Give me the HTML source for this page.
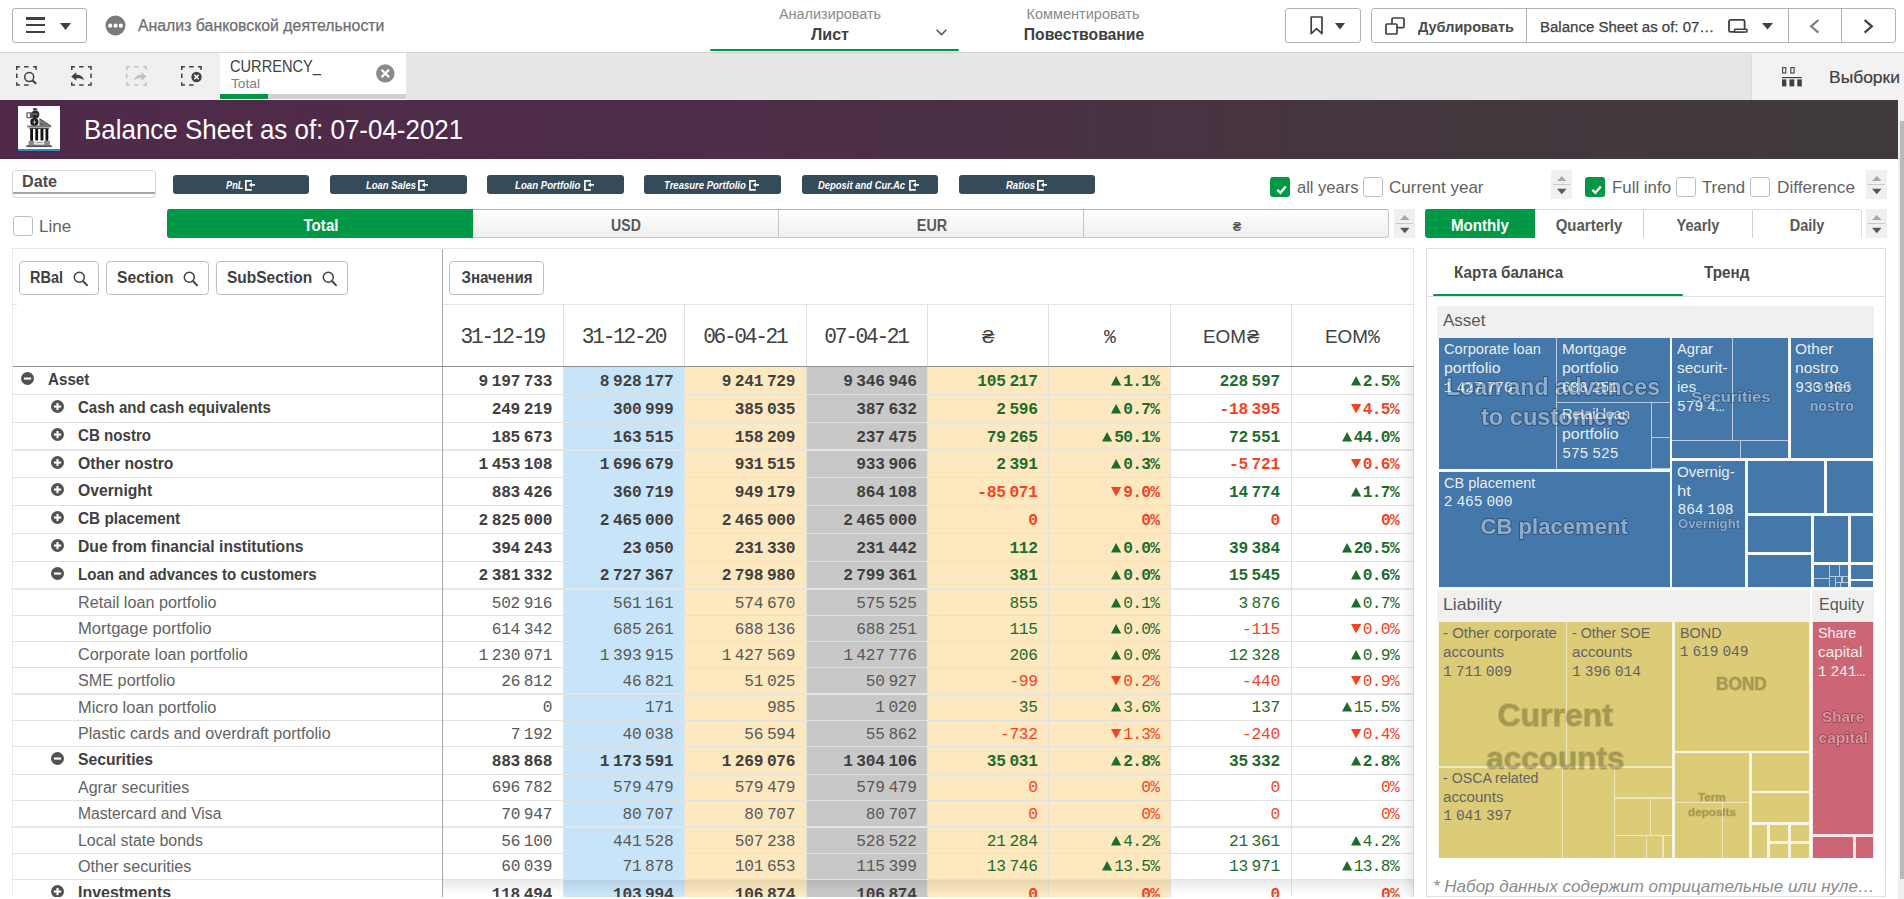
<!DOCTYPE html>
<html><head><meta charset="utf-8"><title>Balance Sheet</title><style>
html,body{margin:0;padding:0;}
body{width:1904px;height:899px;overflow:hidden;background:#fff;position:relative;font-family:"Liberation Sans",sans-serif;color:#404040;}
div{position:absolute;box-sizing:border-box;}
.t{white-space:nowrap;}
svg{position:absolute;overflow:visible;}
</style></head>
<body>
<!-- top bar -->
<div style="left:0px;top:0px;width:1904px;height:53px;background:#fff;border-bottom:1px solid #d4d4d4;"></div>
<div style="left:12px;top:8px;width:74.7px;height:34.6px;border:1px solid #b3b3b3;border-radius:3px;background:#fff;"></div>
<div style="left:26px;top:17.3px;width:18.8px;height:2.3px;background:#404040;"></div>
<div style="left:26px;top:24.1px;width:18.8px;height:2.3px;background:#404040;"></div>
<div style="left:26px;top:31.1px;width:18.8px;height:2.3px;background:#404040;"></div>
<svg style="left:60px;top:22.5px" width="11" height="7"><path d="M0 0H11L5.5 7Z" fill="#404040"/></svg>
<svg style="left:105px;top:15px" width="21" height="21"><circle cx="10.5" cy="10.5" r="10" fill="#7a7a7a"/><circle cx="5.2" cy="10.7" r="2.1" fill="#fff"/><circle cx="10.5" cy="10.7" r="2.1" fill="#fff"/><circle cx="15.8" cy="10.7" r="2.1" fill="#fff"/></svg>
<div class="t" style="left:137.5px;top:17.59px;font-size:15.6px;line-height:15.6px;transform:scaleX(1.0156);transform-origin:left center;color:#6e6e6e;-webkit-text-stroke:0.25px #6e6e6e;">Анализ банковской деятельности</div>
<div class="t" style="left:429.5px;width:800px;text-align:center;top:7.05px;font-size:14px;line-height:14px;transform:scaleX(1.0290);transform-origin:center center;color:#8a8a8a;">Анализировать</div>
<div class="t" style="left:429.5px;width:800px;text-align:center;top:26.86px;font-size:16px;line-height:16px;transform:scaleX(1.0054);transform-origin:center center;color:#404040;font-weight:bold;">Лист</div>
<svg style="left:936px;top:29.3px" width="11" height="7"><path d="M0.6 0.8L5.5 5.6L10.4 0.8" fill="none" stroke="#595959" stroke-width="1.6"/></svg>
<div style="left:709.5px;top:48.7px;width:249.5px;height:2.4px;background:#009845;border-radius:1px;"></div>
<div class="t" style="left:683px;width:800px;text-align:center;top:7.05px;font-size:14px;line-height:14px;transform:scaleX(1.0369);transform-origin:center center;color:#8a8a8a;">Комментировать</div>
<div class="t" style="left:683.9000000000001px;width:800px;text-align:center;top:26.86px;font-size:16px;line-height:16px;transform:scaleX(0.9825);transform-origin:center center;color:#404040;font-weight:bold;">Повествование</div>
<div style="left:1285px;top:8px;width:75.5px;height:34.6px;border:1px solid #b3b3b3;border-radius:3px;background:#fff;"></div>
<svg style="left:1310px;top:16.2px" width="14" height="20"><path d="M1.2 1H12V17.6L6.6 12.6L1.2 17.6Z" fill="none" stroke="#404040" stroke-width="1.7" stroke-linejoin="round"/></svg>
<svg style="left:1335px;top:23px" width="10" height="7"><path d="M0 0H10L5 6.6Z" fill="#404040"/></svg>
<div style="left:1371px;top:8px;width:525px;height:34.6px;border:1px solid #b3b3b3;border-radius:3px;background:#fff;"></div>
<div style="left:1526.2px;top:8px;width:1px;height:34.6px;background:#b3b3b3;"></div>
<div style="left:1788.2px;top:8px;width:1px;height:34.6px;background:#b3b3b3;"></div>
<div style="left:1841.2px;top:8px;width:1px;height:34.6px;background:#b3b3b3;"></div>
<svg style="left:1385px;top:16.6px" width="20" height="18"><rect x="7" y="1" width="12" height="9.6" rx="1" fill="#fff" stroke="#404040" stroke-width="1.7"/><rect x="1" y="7" width="11" height="10" rx="1" fill="#fff" stroke="#404040" stroke-width="1.7"/></svg>
<div class="t" style="left:1417.5px;top:18.96px;font-size:15.4px;line-height:15.4px;transform:scaleX(0.9434);transform-origin:left center;font-weight:bold;color:#4a4a4a;">Дублировать</div>
<div class="t" style="left:1540px;top:18.96px;font-size:15.4px;line-height:15.4px;transform:scaleX(0.9752);transform-origin:left center;color:#404040;-webkit-text-stroke:0.25px #404040;">Balance Sheet as of: 07…</div>
<svg style="left:1727px;top:17.5px" width="22" height="17"><rect x="2" y="1.9" width="15.6" height="12" rx="1.6" fill="#fff" stroke="#404040" stroke-width="1.8"/><rect x="7.6" y="11.3" width="12.4" height="2.8" rx="0.6" fill="#fff" stroke="#404040" stroke-width="1.5"/></svg>
<svg style="left:1762px;top:23px" width="11" height="7"><path d="M0 0H11L5.5 6.6Z" fill="#404040"/></svg>
<svg style="left:1809.4px;top:18.9px" width="11" height="15"><path d="M9.4 1L2.2 7.3L9.4 13.6" fill="none" stroke="#808080" stroke-width="2.3"/></svg>
<svg style="left:1863.2px;top:18.9px" width="11" height="15"><path d="M1.6 1L8.8 7.3L1.6 13.6" fill="none" stroke="#404040" stroke-width="2.3"/></svg>
<!-- selection bar -->
<div style="left:0px;top:53px;width:1904px;height:47px;background:#e6e6e6;"></div>
<div style="left:0px;top:53px;width:220px;height:47px;background:#f0f0f0;"></div>
<svg style="left:16px;top:65.9px" width="21" height="20"><path d="M0.75 3.9V0.75H3.9M8.1 0.75H12.6M17 0.75H20.05V3.9M0.75 12V7.4M3.9 18.95H0.75V16.3M12.6 18.95H8.1" fill="none" stroke="#404040" stroke-width="1.5"/><circle cx="13.2" cy="11" r="4.5" fill="none" stroke="#404040" stroke-width="1.5"/><path d="M16.6 14.6L20.2 17.7" stroke="#404040" stroke-width="2.1"/></svg>
<svg style="left:71.2px;top:65.9px" width="21" height="20"><path d="M0.75 3.9V0.75H3.9M8.1 0.75H12.6M17 0.75H20.05V3.9M20.05 7.4V12M20.05 16.3V18.95H17M12.6 18.95H8.1M3.9 18.95H0.75V16.3" fill="none" stroke="#404040" stroke-width="1.5"/><path d="M0.2 10.5L5.3 6.2V8.8C9.5 8.8 12.2 10.6 13 14.4C11 12.6 8.8 12.2 5.3 12.3V14.8Z" fill="#404040"/></svg>
<svg style="left:126.3px;top:65.9px" width="21" height="20"><path d="M0.75 3.9V0.75H3.9M8.1 0.75H12.6M17 0.75H20.05V3.9M0.75 12V7.4M20.05 16.3V18.95H17M12.6 18.95H8.1M3.9 18.95H0.75V16.3" fill="none" stroke="#c2c2c2" stroke-width="1.5"/><path d="M20.6 10.5L15.5 6.2V8.8C11.3 8.8 8.6 10.6 7.8 14.4C9.8 12.6 12 12.2 15.5 12.3V14.8Z" fill="#c2c2c2"/></svg>
<svg style="left:181.2px;top:65.9px" width="21" height="20"><path d="M0.75 3.9V0.75H3.9M8.1 0.75H12.6M17 0.75H20.05V3.9M0.75 12V7.4M3.9 18.95H0.75V16.3M12.6 18.95H8.1" fill="none" stroke="#404040" stroke-width="1.5"/><circle cx="15.5" cy="11" r="5.2" fill="#404040"/><path d="M13.3 8.8L17.7 13.2M17.7 8.8L13.3 13.2" stroke="#fff" stroke-width="1.5"/></svg>
<div style="left:220px;top:53px;width:186px;height:46.5px;background:#fff;"></div>
<div style="left:220px;top:94px;width:185.5px;height:5px;background:#d0d0d0;"></div>
<div style="left:220px;top:94px;width:47.5px;height:5px;background:#009845;"></div>
<div class="t" style="left:230px;top:59.13px;font-size:15.8px;line-height:15.8px;transform:scaleX(0.9255);transform-origin:left center;color:#404040;">CURRENCY_</div>
<div class="t" style="left:230.5px;top:77.56px;font-size:12.8px;line-height:12.8px;transform:scaleX(1.0726);transform-origin:left center;color:#808080;">Total</div>
<svg style="left:376px;top:64px" width="19" height="19"><circle cx="9.3" cy="9.4" r="9.2" fill="#8a8a8a"/><path d="M5.6 5.7L13 13.1M13 5.7L5.6 13.1" stroke="#fff" stroke-width="2.2"/></svg>
<div style="left:1751px;top:53px;width:153px;height:47px;background:#f2f2f2;border-left:1px solid #dcdcdc;"></div>
<svg style="left:1782px;top:67.2px" width="21" height="20"><rect x="0.6" y="0.6" width="3.2" height="5.4" fill="none" stroke="#404040" stroke-width="1.1"/><rect x="8.8" y="0.6" width="3.3" height="5.4" fill="none" stroke="#404040" stroke-width="1.1"/><rect x="0" y="10" width="19.8" height="1.2" fill="#404040"/><rect x="0" y="12.4" width="4.3" height="7" fill="#404040"/><rect x="7.5" y="12.4" width="4.8" height="7" fill="#404040"/><rect x="15.3" y="12.4" width="4.5" height="7" fill="#404040"/></svg>
<div class="t" style="left:1829.3px;top:69.58px;font-size:16.8px;line-height:16.8px;transform:scaleX(1.0392);transform-origin:left center;color:#404040;-webkit-text-stroke:0.2px #404040;">Выборки</div>
<!-- header -->
<div style="left:0px;top:100px;width:1897.5px;height:59px;background:linear-gradient(90deg,#50294a 0%,#4d2d47 40%,#44373f 75%,#403a3c 100%);"></div>
<div style="left:17.8px;top:105.7px;width:42.3px;height:45.5px;background:#fff;"></div>
<div style="left:17.8px;top:148.7px;width:42.3px;height:2.5px;background:#2b8ac6;"></div>
<svg style="left:17.8px;top:105.7px" width="43" height="46" viewBox="0 0 43 46">
<path d="M14.6 2.6Q17 1.4 19.6 2.9L18.6 4.4H15.6Z" fill="#444"/>
<ellipse cx="17.4" cy="8.4" rx="3.9" ry="4" fill="#2a2a2a"/>
<rect x="8.4" y="6.3" width="6" height="6" rx="0.8" fill="#555"/><rect x="9.6" y="7.4" width="2.2" height="3.8" fill="#fff"/>
<circle cx="15.6" cy="8.3" r="1" fill="#888"/><circle cx="18.4" cy="8.1" r="1" fill="#888"/>
<path d="M21.4 12.8L33 20.2H21.4Z" fill="#777"/><path d="M21.6 12.7L33.2 20" stroke="#444" stroke-width="1"/>
<path d="M22.6 17L26.6 19.6H22.6Z" fill="#555"/>
<circle cx="16.4" cy="16.1" r="4.1" fill="#1c1c1c"/><path d="M16.4 13.6V18.6M14.6 16.1H18.2" stroke="#bbb" stroke-width="0.9"/>
<rect x="9.2" y="19.5" width="23.8" height="1.9" fill="#777"/>
<rect x="11.4" y="21.8" width="19.6" height="1.2" fill="#444"/>
<rect x="12.2" y="23" width="2.8" height="11.8" fill="#111"/><rect x="17.3" y="23" width="2.8" height="11.8" fill="#111"/><rect x="22.5" y="23" width="2.9" height="11.8" fill="#111"/><rect x="27.5" y="23" width="2.8" height="11.8" fill="#111"/>
<rect x="10.6" y="35" width="21.4" height="4.2" fill="#8a8a8a"/><rect x="16.1" y="34.6" width="10" height="4" fill="#f4f4f4"/><rect x="17.6" y="36" width="7" height="1.2" fill="#999"/>
<rect x="8.3" y="39.2" width="25.5" height="1.9" fill="#555"/>
</svg>
<div class="t" style="left:84.4px;top:115.81px;font-size:27.4px;line-height:27.4px;transform:scaleX(0.9467);transform-origin:left center;color:#fff;">Balance Sheet as of: 07-04-2021</div>
<div style="left:1897.5px;top:100px;width:6.5px;height:799px;background:#f0f0f0;"></div>
<div style="left:1899.5px;top:121px;width:4.5px;height:758px;background:#b9b9b9;"></div>
<!-- toolbar -->
<div style="left:12px;top:170px;width:143.5px;height:27.5px;border:1px solid #d9d9d9;border-radius:3px;background:#fff;"></div>
<div style="left:12.5px;top:192.2px;width:142.5px;height:1.5px;background:#a6a6a6;"></div>
<div class="t" style="left:21.9px;top:173.73px;font-size:15.8px;line-height:15.8px;transform:scaleX(1.0220);transform-origin:left center;font-weight:bold;color:#4a4a4a;">Date</div>
<div style="left:173px;top:175px;width:136px;height:18.9px;background:#354b5a;border-radius:3px;"></div>
<div class="t" style="left:226.1px;top:179.51px;font-size:10.5px;line-height:10.5px;transform:scaleX(0.8774);transform-origin:left center;color:#fff;font-weight:bold;font-style:italic;">PnL</div>
<svg style="left:245.0px;top:179.7px" width="11" height="11"><path d="M6.8 0.9H0.9V9.9H6.8" fill="none" stroke="#fff" stroke-width="1.7"/><path d="M3.9 4.9L7 2.2V4.1H10V5.7H7V7.6Z" fill="#fff"/></svg>
<div style="left:330px;top:175px;width:137px;height:18.9px;background:#354b5a;border-radius:3px;"></div>
<div class="t" style="left:366.0px;top:179.51px;font-size:10.5px;line-height:10.5px;transform:scaleX(0.9001);transform-origin:left center;color:#fff;font-weight:bold;font-style:italic;">Loan Sales</div>
<svg style="left:417.79999999999995px;top:179.7px" width="11" height="11"><path d="M6.8 0.9H0.9V9.9H6.8" fill="none" stroke="#fff" stroke-width="1.7"/><path d="M3.9 4.9L7 2.2V4.1H10V5.7H7V7.6Z" fill="#fff"/></svg>
<div style="left:487px;top:175px;width:137px;height:18.9px;background:#354b5a;border-radius:3px;"></div>
<div class="t" style="left:515.1px;top:179.51px;font-size:10.5px;line-height:10.5px;transform:scaleX(0.9191);transform-origin:left center;color:#fff;font-weight:bold;font-style:italic;">Loan Portfolio</div>
<svg style="left:583.6px;top:179.7px" width="11" height="11"><path d="M6.8 0.9H0.9V9.9H6.8" fill="none" stroke="#fff" stroke-width="1.7"/><path d="M3.9 4.9L7 2.2V4.1H10V5.7H7V7.6Z" fill="#fff"/></svg>
<div style="left:644px;top:175px;width:137px;height:18.9px;background:#354b5a;border-radius:3px;"></div>
<div class="t" style="left:663.7px;top:179.51px;font-size:10.5px;line-height:10.5px;transform:scaleX(0.9064);transform-origin:left center;color:#fff;font-weight:bold;font-style:italic;">Treasure Portfolio</div>
<svg style="left:749.0px;top:179.7px" width="11" height="11"><path d="M6.8 0.9H0.9V9.9H6.8" fill="none" stroke="#fff" stroke-width="1.7"/><path d="M3.9 4.9L7 2.2V4.1H10V5.7H7V7.6Z" fill="#fff"/></svg>
<div style="left:802px;top:175px;width:136px;height:18.9px;background:#354b5a;border-radius:3px;"></div>
<div class="t" style="left:817.7px;top:179.51px;font-size:10.5px;line-height:10.5px;transform:scaleX(0.8993);transform-origin:left center;color:#fff;font-weight:bold;font-style:italic;">Deposit and Cur.Ac</div>
<svg style="left:908.6px;top:179.7px" width="11" height="11"><path d="M6.8 0.9H0.9V9.9H6.8" fill="none" stroke="#fff" stroke-width="1.7"/><path d="M3.9 4.9L7 2.2V4.1H10V5.7H7V7.6Z" fill="#fff"/></svg>
<div style="left:959px;top:175px;width:136px;height:18.9px;background:#354b5a;border-radius:3px;"></div>
<div class="t" style="left:1006.2px;top:179.51px;font-size:10.5px;line-height:10.5px;transform:scaleX(0.9037);transform-origin:left center;color:#fff;font-weight:bold;font-style:italic;">Ratios</div>
<svg style="left:1036.7px;top:179.7px" width="11" height="11"><path d="M6.8 0.9H0.9V9.9H6.8" fill="none" stroke="#fff" stroke-width="1.7"/><path d="M3.9 4.9L7 2.2V4.1H10V5.7H7V7.6Z" fill="#fff"/></svg>
<div style="left:1270px;top:177px;width:20px;height:20px;background:#009845;border-radius:3px;"></div>
<svg style="left:1270px;top:177px" width="20" height="20"><path d="M7.3 12.8L10.4 15.8L15.8 9.6" fill="none" stroke="#fff" stroke-width="2.3"/></svg>
<div class="t" style="left:1296.5px;top:178.91px;font-size:17px;line-height:17px;transform:scaleX(0.9715);transform-origin:left center;color:#636363;">all years</div>
<div style="left:1362.7px;top:177px;width:20px;height:20px;background:#fff;border:1px solid #bfbfbf;border-radius:3px;"></div>
<div class="t" style="left:1389px;top:178.91px;font-size:17px;line-height:17px;transform:scaleX(1.0002);transform-origin:left center;color:#636363;">Current year</div>
<div style="left:1551px;top:170px;width:21px;height:28.5px;background:#f0f0f0;"></div>
<svg style="left:1556.7px;top:175.85px" width="9.6" height="18.4"><path d="M0 4.9L4.8 0L9.6 4.9Z" fill="#a8a8a8"/><path d="M0 12.8L4.8 18.2L9.6 12.8Z" fill="#595959"/></svg>
<div style="left:1553px;top:183.85px;width:17px;height:1px;background:#c8c8c8;"></div>
<div style="left:1585px;top:177px;width:20px;height:20px;background:#009845;border-radius:3px;"></div>
<svg style="left:1585px;top:177px" width="20" height="20"><path d="M7.3 12.8L10.4 15.8L15.8 9.6" fill="none" stroke="#fff" stroke-width="2.3"/></svg>
<div class="t" style="left:1611.5px;top:178.91px;font-size:17px;line-height:17px;transform:scaleX(0.9912);transform-origin:left center;color:#636363;">Full info</div>
<div style="left:1676px;top:177px;width:20px;height:20px;background:#fff;border:1px solid #bfbfbf;border-radius:3px;"></div>
<div class="t" style="left:1702.3px;top:178.91px;font-size:17px;line-height:17px;transform:scaleX(0.9822);transform-origin:left center;color:#636363;">Trend</div>
<div style="left:1750px;top:177px;width:20px;height:20px;background:#fff;border:1px solid #bfbfbf;border-radius:3px;"></div>
<div class="t" style="left:1776.5px;top:178.91px;font-size:17px;line-height:17px;transform:scaleX(1.0107);transform-origin:left center;color:#636363;">Difference</div>
<div style="left:1866px;top:170px;width:21px;height:28.5px;background:#f0f0f0;"></div>
<svg style="left:1871.7px;top:175.85px" width="9.6" height="18.4"><path d="M0 4.9L4.8 0L9.6 4.9Z" fill="#a8a8a8"/><path d="M0 12.8L4.8 18.2L9.6 12.8Z" fill="#595959"/></svg>
<div style="left:1868px;top:183.85px;width:17px;height:1px;background:#c8c8c8;"></div>
<div style="left:13px;top:215.8px;width:20px;height:20px;background:#fff;border:1px solid #bfbfbf;border-radius:3px;"></div>
<div class="t" style="left:38.7px;top:217.61px;font-size:17px;line-height:17px;transform:scaleX(1.0049);transform-origin:left center;color:#636363;">Line</div>
<div style="left:166.8px;top:209px;width:1222.7px;height:29px;background:linear-gradient(#ffffff,#efefef);border:1px solid #c8c8c8;border-top-color:#b4b4b4;border-radius:3px;"></div>
<div style="left:166.8px;top:209px;width:306px;height:29px;background:#009845;border-radius:3px 0 0 3px;"></div>
<div style="left:777.8px;top:210px;width:1px;height:27.5px;background:#c4c4c4;"></div>
<div style="left:1083.3px;top:210px;width:1px;height:27.5px;background:#c4c4c4;"></div>
<div class="t" style="left:-78.69999999999999px;width:800px;text-align:center;top:217.99px;font-size:15.6px;line-height:15.6px;transform:scaleX(0.9693);transform-origin:center center;font-weight:bold;color:#fff;">Total</div>
<div class="t" style="left:226.39999999999998px;width:800px;text-align:center;top:217.99px;font-size:15.6px;line-height:15.6px;transform:scaleX(0.9047);transform-origin:center center;font-weight:bold;color:#595959;">USD</div>
<div class="t" style="left:531.7px;width:800px;text-align:center;top:217.99px;font-size:15.6px;line-height:15.6px;transform:scaleX(0.9199);transform-origin:center center;font-weight:bold;color:#595959;">EUR</div>
<div class="t" style="left:837px;width:800px;text-align:center;top:220.09px;font-size:13.6px;line-height:13.6px;transform:scaleX(0.9480);transform-origin:center center;font-weight:bold;color:#595959;">₴</div>
<div style="left:1394px;top:209px;width:21px;height:28.8px;background:#f0f0f0;"></div>
<svg style="left:1399.7px;top:215.0px" width="9.6" height="18.4"><path d="M0 4.9L4.8 0L9.6 4.9Z" fill="#a8a8a8"/><path d="M0 12.8L4.8 18.2L9.6 12.8Z" fill="#595959"/></svg>
<div style="left:1396px;top:223.0px;width:17px;height:1px;background:#c8c8c8;"></div>
<div style="left:1425px;top:209px;width:437px;height:29px;background:#fff;border:1px solid #dcdcdc;border-left:0;border-bottom:0;border-radius:0 3px 0 0;"></div>
<div style="left:1425px;top:209px;width:110px;height:29px;background:#009845;border-radius:3px 0 0 3px;"></div>
<div style="left:1642.6px;top:210px;width:1px;height:28px;background:#d0d0d0;"></div>
<div style="left:1751.6px;top:210px;width:1px;height:28px;background:#d0d0d0;"></div>
<div class="t" style="left:1080.2px;width:800px;text-align:center;top:217.99px;font-size:15.6px;line-height:15.6px;transform:scaleX(0.9701);transform-origin:center center;font-weight:bold;color:#fff;">Monthly</div>
<div class="t" style="left:1189.2px;width:800px;text-align:center;top:217.99px;font-size:15.6px;line-height:15.6px;transform:scaleX(0.9602);transform-origin:center center;font-weight:bold;color:#595959;">Quarterly</div>
<div class="t" style="left:1298px;width:800px;text-align:center;top:217.99px;font-size:15.6px;line-height:15.6px;transform:scaleX(0.9352);transform-origin:center center;font-weight:bold;color:#595959;">Yearly</div>
<div class="t" style="left:1406.9px;width:800px;text-align:center;top:217.99px;font-size:15.6px;line-height:15.6px;transform:scaleX(0.9306);transform-origin:center center;font-weight:bold;color:#595959;">Daily</div>
<div style="left:1866px;top:209px;width:21px;height:28.8px;background:#f0f0f0;"></div>
<svg style="left:1871.7px;top:215.0px" width="9.6" height="18.4"><path d="M0 4.9L4.8 0L9.6 4.9Z" fill="#a8a8a8"/><path d="M0 12.8L4.8 18.2L9.6 12.8Z" fill="#595959"/></svg>
<div style="left:1868px;top:223.0px;width:17px;height:1px;background:#c8c8c8;"></div>
<!-- pivot table -->
<div style="left:12px;top:248px;width:1402px;height:660px;border:1px solid #e6e6e6;border-left-color:#ececec;border-bottom:0;background:#fff;"></div>
<div style="left:563.4px;top:367px;width:121.39999999999998px;height:540px;background:#c8e4f8;"></div>
<div style="left:684.8px;top:367px;width:121.20000000000005px;height:540px;background:#fde8c0;"></div>
<div style="left:806.0px;top:367px;width:121.19999999999993px;height:540px;background:#c8c8c8;"></div>
<div style="left:927.1999999999999px;top:367px;width:121.60000000000002px;height:540px;background:#fde8c0;"></div>
<div style="left:1048.8px;top:367px;width:121.5px;height:540px;background:#fde8c0;"></div>
<div style="left:19px;top:260.7px;width:79.7px;height:34px;border:1px solid #bfbfbf;border-radius:4px;background:#fff;"></div>
<div class="t" style="left:29.7px;top:269.53px;font-size:15.8px;line-height:15.8px;transform:scaleX(0.9167);transform-origin:left center;font-weight:bold;color:#404040;">RBal</div>
<svg style="left:73px;top:270.6px" width="16" height="16"><circle cx="6.3" cy="6.3" r="5" fill="none" stroke="#404040" stroke-width="1.5"/><path d="M10 10L14.6 14.8" stroke="#404040" stroke-width="1.9"/></svg>
<div style="left:106px;top:260.7px;width:102.7px;height:34px;border:1px solid #bfbfbf;border-radius:4px;background:#fff;"></div>
<div class="t" style="left:117.2px;top:269.53px;font-size:15.8px;line-height:15.8px;transform:scaleX(0.9900);transform-origin:left center;font-weight:bold;color:#404040;">Section</div>
<svg style="left:183.2px;top:270.6px" width="16" height="16"><circle cx="6.3" cy="6.3" r="5" fill="none" stroke="#404040" stroke-width="1.5"/><path d="M10 10L14.6 14.8" stroke="#404040" stroke-width="1.9"/></svg>
<div style="left:216.3px;top:260.7px;width:131.6px;height:34px;border:1px solid #bfbfbf;border-radius:4px;background:#fff;"></div>
<div class="t" style="left:227px;top:269.53px;font-size:15.8px;line-height:15.8px;transform:scaleX(0.9815);transform-origin:left center;font-weight:bold;color:#404040;">SubSection</div>
<svg style="left:322px;top:270.6px" width="16" height="16"><circle cx="6.3" cy="6.3" r="5" fill="none" stroke="#404040" stroke-width="1.5"/><path d="M10 10L14.6 14.8" stroke="#404040" stroke-width="1.9"/></svg>
<div style="left:449.3px;top:260.7px;width:94.3px;height:34px;border:1px solid #bfbfbf;border-radius:4px;background:#fff;"></div>
<div class="t" style="left:96.5px;width:800px;text-align:center;top:269.53px;font-size:15.8px;line-height:15.8px;transform:scaleX(0.9560);transform-origin:center center;font-weight:bold;color:#404040;">Значения</div>
<div style="left:442.5px;top:304px;width:971px;height:1px;background:#e3e3e3;"></div>
<div style="left:12.5px;top:304px;width:4px;height:1px;background:#e3e3e3;"></div>
<div style="left:562.9px;top:304.5px;width:1px;height:62px;background:#e0e0e0;"></div>
<div style="left:684.3px;top:304.5px;width:1px;height:62px;background:#e0e0e0;"></div>
<div style="left:805.5px;top:304.5px;width:1px;height:62px;background:#e0e0e0;"></div>
<div style="left:926.6999999999999px;top:304.5px;width:1px;height:62px;background:#e0e0e0;"></div>
<div style="left:1048.3px;top:304.5px;width:1px;height:62px;background:#e0e0e0;"></div>
<div style="left:1169.8px;top:304.5px;width:1px;height:62px;background:#e0e0e0;"></div>
<div style="left:1290.8999999999999px;top:304.5px;width:1px;height:62px;background:#e0e0e0;"></div>
<div class="t" style="left:102.25px;width:800px;text-align:center;top:326.65px;font-size:21.2px;line-height:21.2px;font-family:'Liberation Mono', monospace;color:#404040;letter-spacing:-2.3px;">31-12-19</div>
<div class="t" style="left:223.5px;width:800px;text-align:center;top:326.65px;font-size:21.2px;line-height:21.2px;font-family:'Liberation Mono', monospace;color:#404040;letter-spacing:-2.3px;">31-12-20</div>
<div class="t" style="left:344.80000000000007px;width:800px;text-align:center;top:326.65px;font-size:21.2px;line-height:21.2px;font-family:'Liberation Mono', monospace;color:#404040;letter-spacing:-2.3px;">06-04-21</div>
<div class="t" style="left:466.0px;width:800px;text-align:center;top:326.65px;font-size:21.2px;line-height:21.2px;font-family:'Liberation Mono', monospace;color:#404040;letter-spacing:-2.3px;">07-04-21</div>
<div class="t" style="left:982.3px;top:329.00px;font-size:17.6px;line-height:17.6px;transform:scaleX(1.2770);transform-origin:left center;color:#404040;">₴</div>
<div class="t" style="left:1104px;top:328.83px;font-size:19.4px;line-height:19.4px;font-family:'Liberation Mono', monospace;transform:scaleX(1.0136);transform-origin:left center;color:#404040;">%</div>
<div class="t" style="left:1203.3px;top:326.92px;font-size:19px;line-height:19px;transform:scaleX(0.9935);transform-origin:left center;color:#404040;">EOM</div>
<div class="t" style="left:1246.5px;top:329.00px;font-size:17.6px;line-height:17.6px;transform:scaleX(1.2770);transform-origin:left center;color:#404040;">₴</div>
<div class="t" style="left:1324.8px;top:326.92px;font-size:19px;line-height:19px;transform:scaleX(0.9935);transform-origin:left center;color:#404040;">EOM</div>
<div class="t" style="left:1368.3px;top:328.83px;font-size:19.4px;line-height:19.4px;font-family:'Liberation Mono', monospace;transform:scaleX(1.0136);transform-origin:left center;color:#404040;">%</div>
<svg style="left:21.0px;top:372.4px" width="13" height="13"><circle cx="6.5" cy="6.5" r="6.5" fill="#525252"/><rect x="2.9" y="5.5" width="7.2" height="2.1" fill="#fff"/></svg>
<div class="t" style="left:47.800000000000004px;top:372.00px;font-size:15.8px;line-height:15.8px;transform:scaleX(0.9597);transform-origin:left center;font-weight:bold;color:#404040;">Asset</div>
<div class="t" style="right:1351.8px;top:374.00px;font-size:16.2px;line-height:16.2px;font-family:'Liberation Mono', monospace;letter-spacing:-0.24px;word-spacing:-5.8px;font-weight:bold;color:#404040;">9 197 733</div>
<div class="t" style="right:1230.5px;top:374.00px;font-size:16.2px;line-height:16.2px;font-family:'Liberation Mono', monospace;letter-spacing:-0.24px;word-spacing:-5.8px;font-weight:bold;color:#404040;">8 928 177</div>
<div class="t" style="right:1108.6999999999998px;top:374.00px;font-size:16.2px;line-height:16.2px;font-family:'Liberation Mono', monospace;letter-spacing:-0.24px;word-spacing:-5.8px;font-weight:bold;color:#404040;">9 241 729</div>
<div class="t" style="right:987.2px;top:374.00px;font-size:16.2px;line-height:16.2px;font-family:'Liberation Mono', monospace;letter-spacing:-0.24px;word-spacing:-5.8px;font-weight:bold;color:#404040;">9 346 946</div>
<div class="t" style="right:866.2px;top:374.00px;font-size:16.2px;line-height:16.2px;font-family:'Liberation Mono', monospace;letter-spacing:-0.24px;word-spacing:-5.8px;font-weight:bold;color:#1e6b2c;">105 217</div>
<div class="t" style="right:744.7px;top:374.00px;font-size:16.2px;line-height:16.2px;font-family:'Liberation Mono', monospace;letter-spacing:-0.7px;word-spacing:-5.8px;font-weight:bold;color:#1e6b2c;"><svg width="10.2" height="9.6" style="position:static;display:inline-block;vertical-align:baseline;margin-right:1.6px"><path d="M0 9.6L5.1 0L10.2 9.6Z" fill="#1e6b2c"/></svg>1.1%</div>
<div class="t" style="right:624.0px;top:374.00px;font-size:16.2px;line-height:16.2px;font-family:'Liberation Mono', monospace;letter-spacing:-0.24px;word-spacing:-5.8px;font-weight:bold;color:#1e6b2c;">228 597</div>
<div class="t" style="right:505.0999999999999px;top:374.00px;font-size:16.2px;line-height:16.2px;font-family:'Liberation Mono', monospace;letter-spacing:-0.7px;word-spacing:-5.8px;font-weight:bold;color:#1e6b2c;"><svg width="10.2" height="9.6" style="position:static;display:inline-block;vertical-align:baseline;margin-right:1.6px"><path d="M0 9.6L5.1 0L10.2 9.6Z" fill="#1e6b2c"/></svg>2.5%</div>
<div style="left:12.5px;top:393.8px;width:1401px;height:1px;background:#e2e2e2;"></div>
<svg style="left:50.7px;top:400.2px" width="13" height="13"><circle cx="6.5" cy="6.5" r="6.5" fill="#525252"/><rect x="2.9" y="5.5" width="7.2" height="2.1" fill="#fff"/><rect x="5.45" y="2.95" width="2.1" height="7.2" fill="#fff"/></svg>
<div class="t" style="left:77.8px;top:400.00px;font-size:15.8px;line-height:15.8px;transform:scaleX(0.9515);transform-origin:left center;font-weight:bold;color:#404040;">Cash and cash equivalents</div>
<div class="t" style="right:1351.8px;top:402.00px;font-size:16.2px;line-height:16.2px;font-family:'Liberation Mono', monospace;letter-spacing:-0.24px;word-spacing:-5.8px;font-weight:bold;color:#404040;">249 219</div>
<div class="t" style="right:1230.5px;top:402.00px;font-size:16.2px;line-height:16.2px;font-family:'Liberation Mono', monospace;letter-spacing:-0.24px;word-spacing:-5.8px;font-weight:bold;color:#404040;">300 999</div>
<div class="t" style="right:1108.6999999999998px;top:402.00px;font-size:16.2px;line-height:16.2px;font-family:'Liberation Mono', monospace;letter-spacing:-0.24px;word-spacing:-5.8px;font-weight:bold;color:#404040;">385 035</div>
<div class="t" style="right:987.2px;top:402.00px;font-size:16.2px;line-height:16.2px;font-family:'Liberation Mono', monospace;letter-spacing:-0.24px;word-spacing:-5.8px;font-weight:bold;color:#404040;">387 632</div>
<div class="t" style="right:866.2px;top:402.00px;font-size:16.2px;line-height:16.2px;font-family:'Liberation Mono', monospace;letter-spacing:-0.24px;word-spacing:-5.8px;font-weight:bold;color:#1e6b2c;">2 596</div>
<div class="t" style="right:744.7px;top:402.00px;font-size:16.2px;line-height:16.2px;font-family:'Liberation Mono', monospace;letter-spacing:-0.7px;word-spacing:-5.8px;font-weight:bold;color:#1e6b2c;"><svg width="10.2" height="9.6" style="position:static;display:inline-block;vertical-align:baseline;margin-right:1.6px"><path d="M0 9.6L5.1 0L10.2 9.6Z" fill="#1e6b2c"/></svg>0.7%</div>
<div class="t" style="right:624.0px;top:402.00px;font-size:16.2px;line-height:16.2px;font-family:'Liberation Mono', monospace;letter-spacing:-0.24px;word-spacing:-5.8px;font-weight:bold;color:#f5431f;">-18 395</div>
<div class="t" style="right:505.0999999999999px;top:402.00px;font-size:16.2px;line-height:16.2px;font-family:'Liberation Mono', monospace;letter-spacing:-0.7px;word-spacing:-5.8px;font-weight:bold;color:#f5431f;"><svg width="10.2" height="9.6" style="position:static;display:inline-block;vertical-align:baseline;margin-right:1.6px"><path d="M0 0H10.2L5.1 9.6Z" fill="#f5431f"/></svg>4.5%</div>
<div style="left:12.5px;top:421.8px;width:1401px;height:1px;background:#e2e2e2;"></div>
<svg style="left:50.7px;top:428.0px" width="13" height="13"><circle cx="6.5" cy="6.5" r="6.5" fill="#525252"/><rect x="2.9" y="5.5" width="7.2" height="2.1" fill="#fff"/><rect x="5.45" y="2.95" width="2.1" height="7.2" fill="#fff"/></svg>
<div class="t" style="left:77.8px;top:428.00px;font-size:15.8px;line-height:15.8px;transform:scaleX(0.9573);transform-origin:left center;font-weight:bold;color:#404040;">CB nostro</div>
<div class="t" style="right:1351.8px;top:430.00px;font-size:16.2px;line-height:16.2px;font-family:'Liberation Mono', monospace;letter-spacing:-0.24px;word-spacing:-5.8px;font-weight:bold;color:#404040;">185 673</div>
<div class="t" style="right:1230.5px;top:430.00px;font-size:16.2px;line-height:16.2px;font-family:'Liberation Mono', monospace;letter-spacing:-0.24px;word-spacing:-5.8px;font-weight:bold;color:#404040;">163 515</div>
<div class="t" style="right:1108.6999999999998px;top:430.00px;font-size:16.2px;line-height:16.2px;font-family:'Liberation Mono', monospace;letter-spacing:-0.24px;word-spacing:-5.8px;font-weight:bold;color:#404040;">158 209</div>
<div class="t" style="right:987.2px;top:430.00px;font-size:16.2px;line-height:16.2px;font-family:'Liberation Mono', monospace;letter-spacing:-0.24px;word-spacing:-5.8px;font-weight:bold;color:#404040;">237 475</div>
<div class="t" style="right:866.2px;top:430.00px;font-size:16.2px;line-height:16.2px;font-family:'Liberation Mono', monospace;letter-spacing:-0.24px;word-spacing:-5.8px;font-weight:bold;color:#1e6b2c;">79 265</div>
<div class="t" style="right:744.7px;top:430.00px;font-size:16.2px;line-height:16.2px;font-family:'Liberation Mono', monospace;letter-spacing:-0.7px;word-spacing:-5.8px;font-weight:bold;color:#1e6b2c;"><svg width="10.2" height="9.6" style="position:static;display:inline-block;vertical-align:baseline;margin-right:1.6px"><path d="M0 9.6L5.1 0L10.2 9.6Z" fill="#1e6b2c"/></svg>50.1%</div>
<div class="t" style="right:624.0px;top:430.00px;font-size:16.2px;line-height:16.2px;font-family:'Liberation Mono', monospace;letter-spacing:-0.24px;word-spacing:-5.8px;font-weight:bold;color:#1e6b2c;">72 551</div>
<div class="t" style="right:505.0999999999999px;top:430.00px;font-size:16.2px;line-height:16.2px;font-family:'Liberation Mono', monospace;letter-spacing:-0.7px;word-spacing:-5.8px;font-weight:bold;color:#1e6b2c;"><svg width="10.2" height="9.6" style="position:static;display:inline-block;vertical-align:baseline;margin-right:1.6px"><path d="M0 9.6L5.1 0L10.2 9.6Z" fill="#1e6b2c"/></svg>44.0%</div>
<div style="left:12.5px;top:448.9px;width:1401px;height:2px;background:#e6e6e6;"></div>
<svg style="left:50.7px;top:455.6px" width="13" height="13"><circle cx="6.5" cy="6.5" r="6.5" fill="#525252"/><rect x="2.9" y="5.5" width="7.2" height="2.1" fill="#fff"/><rect x="5.45" y="2.95" width="2.1" height="7.2" fill="#fff"/></svg>
<div class="t" style="left:77.8px;top:456.00px;font-size:15.8px;line-height:15.8px;transform:scaleX(0.9971);transform-origin:left center;font-weight:bold;color:#404040;">Other nostro</div>
<div class="t" style="right:1351.8px;top:457.00px;font-size:16.2px;line-height:16.2px;font-family:'Liberation Mono', monospace;letter-spacing:-0.24px;word-spacing:-5.8px;font-weight:bold;color:#404040;">1 453 108</div>
<div class="t" style="right:1230.5px;top:457.00px;font-size:16.2px;line-height:16.2px;font-family:'Liberation Mono', monospace;letter-spacing:-0.24px;word-spacing:-5.8px;font-weight:bold;color:#404040;">1 696 679</div>
<div class="t" style="right:1108.6999999999998px;top:457.00px;font-size:16.2px;line-height:16.2px;font-family:'Liberation Mono', monospace;letter-spacing:-0.24px;word-spacing:-5.8px;font-weight:bold;color:#404040;">931 515</div>
<div class="t" style="right:987.2px;top:457.00px;font-size:16.2px;line-height:16.2px;font-family:'Liberation Mono', monospace;letter-spacing:-0.24px;word-spacing:-5.8px;font-weight:bold;color:#404040;">933 906</div>
<div class="t" style="right:866.2px;top:457.00px;font-size:16.2px;line-height:16.2px;font-family:'Liberation Mono', monospace;letter-spacing:-0.24px;word-spacing:-5.8px;font-weight:bold;color:#1e6b2c;">2 391</div>
<div class="t" style="right:744.7px;top:457.00px;font-size:16.2px;line-height:16.2px;font-family:'Liberation Mono', monospace;letter-spacing:-0.7px;word-spacing:-5.8px;font-weight:bold;color:#1e6b2c;"><svg width="10.2" height="9.6" style="position:static;display:inline-block;vertical-align:baseline;margin-right:1.6px"><path d="M0 9.6L5.1 0L10.2 9.6Z" fill="#1e6b2c"/></svg>0.3%</div>
<div class="t" style="right:624.0px;top:457.00px;font-size:16.2px;line-height:16.2px;font-family:'Liberation Mono', monospace;letter-spacing:-0.24px;word-spacing:-5.8px;font-weight:bold;color:#f5431f;">-5 721</div>
<div class="t" style="right:505.0999999999999px;top:457.00px;font-size:16.2px;line-height:16.2px;font-family:'Liberation Mono', monospace;letter-spacing:-0.7px;word-spacing:-5.8px;font-weight:bold;color:#f5431f;"><svg width="10.2" height="9.6" style="position:static;display:inline-block;vertical-align:baseline;margin-right:1.6px"><path d="M0 0H10.2L5.1 9.6Z" fill="#f5431f"/></svg>0.6%</div>
<div style="left:12.5px;top:477.1px;width:1401px;height:1px;background:#e2e2e2;"></div>
<svg style="left:50.7px;top:483.4px" width="13" height="13"><circle cx="6.5" cy="6.5" r="6.5" fill="#525252"/><rect x="2.9" y="5.5" width="7.2" height="2.1" fill="#fff"/><rect x="5.45" y="2.95" width="2.1" height="7.2" fill="#fff"/></svg>
<div class="t" style="left:77.8px;top:483.00px;font-size:15.8px;line-height:15.8px;transform:scaleX(0.9944);transform-origin:left center;font-weight:bold;color:#404040;">Overnight</div>
<div class="t" style="right:1351.8px;top:485.00px;font-size:16.2px;line-height:16.2px;font-family:'Liberation Mono', monospace;letter-spacing:-0.24px;word-spacing:-5.8px;font-weight:bold;color:#404040;">883 426</div>
<div class="t" style="right:1230.5px;top:485.00px;font-size:16.2px;line-height:16.2px;font-family:'Liberation Mono', monospace;letter-spacing:-0.24px;word-spacing:-5.8px;font-weight:bold;color:#404040;">360 719</div>
<div class="t" style="right:1108.6999999999998px;top:485.00px;font-size:16.2px;line-height:16.2px;font-family:'Liberation Mono', monospace;letter-spacing:-0.24px;word-spacing:-5.8px;font-weight:bold;color:#404040;">949 179</div>
<div class="t" style="right:987.2px;top:485.00px;font-size:16.2px;line-height:16.2px;font-family:'Liberation Mono', monospace;letter-spacing:-0.24px;word-spacing:-5.8px;font-weight:bold;color:#404040;">864 108</div>
<div class="t" style="right:866.2px;top:485.00px;font-size:16.2px;line-height:16.2px;font-family:'Liberation Mono', monospace;letter-spacing:-0.24px;word-spacing:-5.8px;font-weight:bold;color:#f5431f;">-85 071</div>
<div class="t" style="right:744.7px;top:485.00px;font-size:16.2px;line-height:16.2px;font-family:'Liberation Mono', monospace;letter-spacing:-0.7px;word-spacing:-5.8px;font-weight:bold;color:#f5431f;"><svg width="10.2" height="9.6" style="position:static;display:inline-block;vertical-align:baseline;margin-right:1.6px"><path d="M0 0H10.2L5.1 9.6Z" fill="#f5431f"/></svg>9.0%</div>
<div class="t" style="right:624.0px;top:485.00px;font-size:16.2px;line-height:16.2px;font-family:'Liberation Mono', monospace;letter-spacing:-0.24px;word-spacing:-5.8px;font-weight:bold;color:#1e6b2c;">14 774</div>
<div class="t" style="right:505.0999999999999px;top:485.00px;font-size:16.2px;line-height:16.2px;font-family:'Liberation Mono', monospace;letter-spacing:-0.7px;word-spacing:-5.8px;font-weight:bold;color:#1e6b2c;"><svg width="10.2" height="9.6" style="position:static;display:inline-block;vertical-align:baseline;margin-right:1.6px"><path d="M0 9.6L5.1 0L10.2 9.6Z" fill="#1e6b2c"/></svg>1.7%</div>
<div style="left:12.5px;top:505.0px;width:1401px;height:1px;background:#e2e2e2;"></div>
<svg style="left:50.7px;top:511.4px" width="13" height="13"><circle cx="6.5" cy="6.5" r="6.5" fill="#525252"/><rect x="2.9" y="5.5" width="7.2" height="2.1" fill="#fff"/><rect x="5.45" y="2.95" width="2.1" height="7.2" fill="#fff"/></svg>
<div class="t" style="left:77.8px;top:511.00px;font-size:15.8px;line-height:15.8px;transform:scaleX(0.9700);transform-origin:left center;font-weight:bold;color:#404040;">CB placement</div>
<div class="t" style="right:1351.8px;top:513.00px;font-size:16.2px;line-height:16.2px;font-family:'Liberation Mono', monospace;letter-spacing:-0.24px;word-spacing:-5.8px;font-weight:bold;color:#404040;">2 825 000</div>
<div class="t" style="right:1230.5px;top:513.00px;font-size:16.2px;line-height:16.2px;font-family:'Liberation Mono', monospace;letter-spacing:-0.24px;word-spacing:-5.8px;font-weight:bold;color:#404040;">2 465 000</div>
<div class="t" style="right:1108.6999999999998px;top:513.00px;font-size:16.2px;line-height:16.2px;font-family:'Liberation Mono', monospace;letter-spacing:-0.24px;word-spacing:-5.8px;font-weight:bold;color:#404040;">2 465 000</div>
<div class="t" style="right:987.2px;top:513.00px;font-size:16.2px;line-height:16.2px;font-family:'Liberation Mono', monospace;letter-spacing:-0.24px;word-spacing:-5.8px;font-weight:bold;color:#404040;">2 465 000</div>
<div class="t" style="right:866.2px;top:513.00px;font-size:16.2px;line-height:16.2px;font-family:'Liberation Mono', monospace;letter-spacing:-0.24px;word-spacing:-5.8px;font-weight:bold;color:#f5431f;">0</div>
<div class="t" style="right:744.7px;top:513.00px;font-size:16.2px;line-height:16.2px;font-family:'Liberation Mono', monospace;letter-spacing:-0.7px;word-spacing:-5.8px;font-weight:bold;color:#f5431f;">0%</div>
<div class="t" style="right:624.0px;top:513.00px;font-size:16.2px;line-height:16.2px;font-family:'Liberation Mono', monospace;letter-spacing:-0.24px;word-spacing:-5.8px;font-weight:bold;color:#f5431f;">0</div>
<div class="t" style="right:505.0999999999999px;top:513.00px;font-size:16.2px;line-height:16.2px;font-family:'Liberation Mono', monospace;letter-spacing:-0.7px;word-spacing:-5.8px;font-weight:bold;color:#f5431f;">0%</div>
<div style="left:12.5px;top:532.9px;width:1401px;height:1px;background:#e2e2e2;"></div>
<svg style="left:50.7px;top:539.2px" width="13" height="13"><circle cx="6.5" cy="6.5" r="6.5" fill="#525252"/><rect x="2.9" y="5.5" width="7.2" height="2.1" fill="#fff"/><rect x="5.45" y="2.95" width="2.1" height="7.2" fill="#fff"/></svg>
<div class="t" style="left:77.8px;top:539.00px;font-size:15.8px;line-height:15.8px;transform:scaleX(0.9918);transform-origin:left center;font-weight:bold;color:#404040;">Due from financial institutions</div>
<div class="t" style="right:1351.8px;top:541.00px;font-size:16.2px;line-height:16.2px;font-family:'Liberation Mono', monospace;letter-spacing:-0.24px;word-spacing:-5.8px;font-weight:bold;color:#404040;">394 243</div>
<div class="t" style="right:1230.5px;top:541.00px;font-size:16.2px;line-height:16.2px;font-family:'Liberation Mono', monospace;letter-spacing:-0.24px;word-spacing:-5.8px;font-weight:bold;color:#404040;">23 050</div>
<div class="t" style="right:1108.6999999999998px;top:541.00px;font-size:16.2px;line-height:16.2px;font-family:'Liberation Mono', monospace;letter-spacing:-0.24px;word-spacing:-5.8px;font-weight:bold;color:#404040;">231 330</div>
<div class="t" style="right:987.2px;top:541.00px;font-size:16.2px;line-height:16.2px;font-family:'Liberation Mono', monospace;letter-spacing:-0.24px;word-spacing:-5.8px;font-weight:bold;color:#404040;">231 442</div>
<div class="t" style="right:866.2px;top:541.00px;font-size:16.2px;line-height:16.2px;font-family:'Liberation Mono', monospace;letter-spacing:-0.24px;word-spacing:-5.8px;font-weight:bold;color:#1e6b2c;">112</div>
<div class="t" style="right:744.7px;top:541.00px;font-size:16.2px;line-height:16.2px;font-family:'Liberation Mono', monospace;letter-spacing:-0.7px;word-spacing:-5.8px;font-weight:bold;color:#1e6b2c;"><svg width="10.2" height="9.6" style="position:static;display:inline-block;vertical-align:baseline;margin-right:1.6px"><path d="M0 9.6L5.1 0L10.2 9.6Z" fill="#1e6b2c"/></svg>0.0%</div>
<div class="t" style="right:624.0px;top:541.00px;font-size:16.2px;line-height:16.2px;font-family:'Liberation Mono', monospace;letter-spacing:-0.24px;word-spacing:-5.8px;font-weight:bold;color:#1e6b2c;">39 384</div>
<div class="t" style="right:505.0999999999999px;top:541.00px;font-size:16.2px;line-height:16.2px;font-family:'Liberation Mono', monospace;letter-spacing:-0.7px;word-spacing:-5.8px;font-weight:bold;color:#1e6b2c;"><svg width="10.2" height="9.6" style="position:static;display:inline-block;vertical-align:baseline;margin-right:1.6px"><path d="M0 9.6L5.1 0L10.2 9.6Z" fill="#1e6b2c"/></svg>20.5%</div>
<div style="left:12.5px;top:560.8px;width:1401px;height:1px;background:#e2e2e2;"></div>
<svg style="left:50.7px;top:566.9px" width="13" height="13"><circle cx="6.5" cy="6.5" r="6.5" fill="#525252"/><rect x="2.9" y="5.5" width="7.2" height="2.1" fill="#fff"/></svg>
<div class="t" style="left:77.8px;top:567.00px;font-size:15.8px;line-height:15.8px;transform:scaleX(0.9539);transform-origin:left center;font-weight:bold;color:#404040;">Loan and advances to customers</div>
<div class="t" style="right:1351.8px;top:568.00px;font-size:16.2px;line-height:16.2px;font-family:'Liberation Mono', monospace;letter-spacing:-0.24px;word-spacing:-5.8px;font-weight:bold;color:#404040;">2 381 332</div>
<div class="t" style="right:1230.5px;top:568.00px;font-size:16.2px;line-height:16.2px;font-family:'Liberation Mono', monospace;letter-spacing:-0.24px;word-spacing:-5.8px;font-weight:bold;color:#404040;">2 727 367</div>
<div class="t" style="right:1108.6999999999998px;top:568.00px;font-size:16.2px;line-height:16.2px;font-family:'Liberation Mono', monospace;letter-spacing:-0.24px;word-spacing:-5.8px;font-weight:bold;color:#404040;">2 798 980</div>
<div class="t" style="right:987.2px;top:568.00px;font-size:16.2px;line-height:16.2px;font-family:'Liberation Mono', monospace;letter-spacing:-0.24px;word-spacing:-5.8px;font-weight:bold;color:#404040;">2 799 361</div>
<div class="t" style="right:866.2px;top:568.00px;font-size:16.2px;line-height:16.2px;font-family:'Liberation Mono', monospace;letter-spacing:-0.24px;word-spacing:-5.8px;font-weight:bold;color:#1e6b2c;">381</div>
<div class="t" style="right:744.7px;top:568.00px;font-size:16.2px;line-height:16.2px;font-family:'Liberation Mono', monospace;letter-spacing:-0.7px;word-spacing:-5.8px;font-weight:bold;color:#1e6b2c;"><svg width="10.2" height="9.6" style="position:static;display:inline-block;vertical-align:baseline;margin-right:1.6px"><path d="M0 9.6L5.1 0L10.2 9.6Z" fill="#1e6b2c"/></svg>0.0%</div>
<div class="t" style="right:624.0px;top:568.00px;font-size:16.2px;line-height:16.2px;font-family:'Liberation Mono', monospace;letter-spacing:-0.24px;word-spacing:-5.8px;font-weight:bold;color:#1e6b2c;">15 545</div>
<div class="t" style="right:505.0999999999999px;top:568.00px;font-size:16.2px;line-height:16.2px;font-family:'Liberation Mono', monospace;letter-spacing:-0.7px;word-spacing:-5.8px;font-weight:bold;color:#1e6b2c;"><svg width="10.2" height="9.6" style="position:static;display:inline-block;vertical-align:baseline;margin-right:1.6px"><path d="M0 9.6L5.1 0L10.2 9.6Z" fill="#1e6b2c"/></svg>0.6%</div>
<div style="left:12.5px;top:587.7px;width:1401px;height:2px;background:#e6e6e6;"></div>
<div class="t" style="left:77.8px;top:595.00px;font-size:15.8px;line-height:15.8px;transform:scaleX(1.0240);transform-origin:left center;color:#636363;">Retail loan portfolio</div>
<div class="t" style="right:1351.8px;top:596.00px;font-size:16.2px;line-height:16.2px;font-family:'Liberation Mono', monospace;letter-spacing:-0.24px;word-spacing:-5.8px;color:#595959;">502 916</div>
<div class="t" style="right:1230.5px;top:596.00px;font-size:16.2px;line-height:16.2px;font-family:'Liberation Mono', monospace;letter-spacing:-0.24px;word-spacing:-5.8px;color:#595959;">561 161</div>
<div class="t" style="right:1108.6999999999998px;top:596.00px;font-size:16.2px;line-height:16.2px;font-family:'Liberation Mono', monospace;letter-spacing:-0.24px;word-spacing:-5.8px;color:#595959;">574 670</div>
<div class="t" style="right:987.2px;top:596.00px;font-size:16.2px;line-height:16.2px;font-family:'Liberation Mono', monospace;letter-spacing:-0.24px;word-spacing:-5.8px;color:#595959;">575 525</div>
<div class="t" style="right:866.2px;top:596.00px;font-size:16.2px;line-height:16.2px;font-family:'Liberation Mono', monospace;letter-spacing:-0.24px;word-spacing:-5.8px;color:#1e6b2c;">855</div>
<div class="t" style="right:744.7px;top:596.00px;font-size:16.2px;line-height:16.2px;font-family:'Liberation Mono', monospace;letter-spacing:-0.7px;word-spacing:-5.8px;color:#1e6b2c;"><svg width="10.2" height="9.6" style="position:static;display:inline-block;vertical-align:baseline;margin-right:1.6px"><path d="M0 9.6L5.1 0L10.2 9.6Z" fill="#1e6b2c"/></svg>0.1%</div>
<div class="t" style="right:624.0px;top:596.00px;font-size:16.2px;line-height:16.2px;font-family:'Liberation Mono', monospace;letter-spacing:-0.24px;word-spacing:-5.8px;color:#1e6b2c;">3 876</div>
<div class="t" style="right:505.0999999999999px;top:596.00px;font-size:16.2px;line-height:16.2px;font-family:'Liberation Mono', monospace;letter-spacing:-0.7px;word-spacing:-5.8px;color:#1e6b2c;"><svg width="10.2" height="9.6" style="position:static;display:inline-block;vertical-align:baseline;margin-right:1.6px"><path d="M0 9.6L5.1 0L10.2 9.6Z" fill="#1e6b2c"/></svg>0.7%</div>
<div style="left:12.5px;top:614.9px;width:1401px;height:1px;background:#e2e2e2;"></div>
<div class="t" style="left:77.8px;top:621.00px;font-size:15.8px;line-height:15.8px;transform:scaleX(1.0491);transform-origin:left center;color:#636363;">Mortgage portfolio</div>
<div class="t" style="right:1351.8px;top:622.00px;font-size:16.2px;line-height:16.2px;font-family:'Liberation Mono', monospace;letter-spacing:-0.24px;word-spacing:-5.8px;color:#595959;">614 342</div>
<div class="t" style="right:1230.5px;top:622.00px;font-size:16.2px;line-height:16.2px;font-family:'Liberation Mono', monospace;letter-spacing:-0.24px;word-spacing:-5.8px;color:#595959;">685 261</div>
<div class="t" style="right:1108.6999999999998px;top:622.00px;font-size:16.2px;line-height:16.2px;font-family:'Liberation Mono', monospace;letter-spacing:-0.24px;word-spacing:-5.8px;color:#595959;">688 136</div>
<div class="t" style="right:987.2px;top:622.00px;font-size:16.2px;line-height:16.2px;font-family:'Liberation Mono', monospace;letter-spacing:-0.24px;word-spacing:-5.8px;color:#595959;">688 251</div>
<div class="t" style="right:866.2px;top:622.00px;font-size:16.2px;line-height:16.2px;font-family:'Liberation Mono', monospace;letter-spacing:-0.24px;word-spacing:-5.8px;color:#1e6b2c;">115</div>
<div class="t" style="right:744.7px;top:622.00px;font-size:16.2px;line-height:16.2px;font-family:'Liberation Mono', monospace;letter-spacing:-0.7px;word-spacing:-5.8px;color:#1e6b2c;"><svg width="10.2" height="9.6" style="position:static;display:inline-block;vertical-align:baseline;margin-right:1.6px"><path d="M0 9.6L5.1 0L10.2 9.6Z" fill="#1e6b2c"/></svg>0.0%</div>
<div class="t" style="right:624.0px;top:622.00px;font-size:16.2px;line-height:16.2px;font-family:'Liberation Mono', monospace;letter-spacing:-0.24px;word-spacing:-5.8px;color:#f5431f;">-115</div>
<div class="t" style="right:505.0999999999999px;top:622.00px;font-size:16.2px;line-height:16.2px;font-family:'Liberation Mono', monospace;letter-spacing:-0.7px;word-spacing:-5.8px;color:#f5431f;"><svg width="10.2" height="9.6" style="position:static;display:inline-block;vertical-align:baseline;margin-right:1.6px"><path d="M0 0H10.2L5.1 9.6Z" fill="#f5431f"/></svg>0.0%</div>
<div style="left:12.5px;top:640.9px;width:1401px;height:1px;background:#e2e2e2;"></div>
<div class="t" style="left:77.8px;top:647.00px;font-size:15.8px;line-height:15.8px;transform:scaleX(1.0289);transform-origin:left center;color:#636363;">Corporate loan portfolio</div>
<div class="t" style="right:1351.8px;top:648.00px;font-size:16.2px;line-height:16.2px;font-family:'Liberation Mono', monospace;letter-spacing:-0.24px;word-spacing:-5.8px;color:#595959;">1 230 071</div>
<div class="t" style="right:1230.5px;top:648.00px;font-size:16.2px;line-height:16.2px;font-family:'Liberation Mono', monospace;letter-spacing:-0.24px;word-spacing:-5.8px;color:#595959;">1 393 915</div>
<div class="t" style="right:1108.6999999999998px;top:648.00px;font-size:16.2px;line-height:16.2px;font-family:'Liberation Mono', monospace;letter-spacing:-0.24px;word-spacing:-5.8px;color:#595959;">1 427 569</div>
<div class="t" style="right:987.2px;top:648.00px;font-size:16.2px;line-height:16.2px;font-family:'Liberation Mono', monospace;letter-spacing:-0.24px;word-spacing:-5.8px;color:#595959;">1 427 776</div>
<div class="t" style="right:866.2px;top:648.00px;font-size:16.2px;line-height:16.2px;font-family:'Liberation Mono', monospace;letter-spacing:-0.24px;word-spacing:-5.8px;color:#1e6b2c;">206</div>
<div class="t" style="right:744.7px;top:648.00px;font-size:16.2px;line-height:16.2px;font-family:'Liberation Mono', monospace;letter-spacing:-0.7px;word-spacing:-5.8px;color:#1e6b2c;"><svg width="10.2" height="9.6" style="position:static;display:inline-block;vertical-align:baseline;margin-right:1.6px"><path d="M0 9.6L5.1 0L10.2 9.6Z" fill="#1e6b2c"/></svg>0.0%</div>
<div class="t" style="right:624.0px;top:648.00px;font-size:16.2px;line-height:16.2px;font-family:'Liberation Mono', monospace;letter-spacing:-0.24px;word-spacing:-5.8px;color:#1e6b2c;">12 328</div>
<div class="t" style="right:505.0999999999999px;top:648.00px;font-size:16.2px;line-height:16.2px;font-family:'Liberation Mono', monospace;letter-spacing:-0.7px;word-spacing:-5.8px;color:#1e6b2c;"><svg width="10.2" height="9.6" style="position:static;display:inline-block;vertical-align:baseline;margin-right:1.6px"><path d="M0 9.6L5.1 0L10.2 9.6Z" fill="#1e6b2c"/></svg>0.9%</div>
<div style="left:12.5px;top:666.9px;width:1401px;height:1px;background:#e2e2e2;"></div>
<div class="t" style="left:77.8px;top:673.00px;font-size:15.8px;line-height:15.8px;transform:scaleX(1.0259);transform-origin:left center;color:#636363;">SME portfolio</div>
<div class="t" style="right:1351.8px;top:674.00px;font-size:16.2px;line-height:16.2px;font-family:'Liberation Mono', monospace;letter-spacing:-0.24px;word-spacing:-5.8px;color:#595959;">26 812</div>
<div class="t" style="right:1230.5px;top:674.00px;font-size:16.2px;line-height:16.2px;font-family:'Liberation Mono', monospace;letter-spacing:-0.24px;word-spacing:-5.8px;color:#595959;">46 821</div>
<div class="t" style="right:1108.6999999999998px;top:674.00px;font-size:16.2px;line-height:16.2px;font-family:'Liberation Mono', monospace;letter-spacing:-0.24px;word-spacing:-5.8px;color:#595959;">51 025</div>
<div class="t" style="right:987.2px;top:674.00px;font-size:16.2px;line-height:16.2px;font-family:'Liberation Mono', monospace;letter-spacing:-0.24px;word-spacing:-5.8px;color:#595959;">50 927</div>
<div class="t" style="right:866.2px;top:674.00px;font-size:16.2px;line-height:16.2px;font-family:'Liberation Mono', monospace;letter-spacing:-0.24px;word-spacing:-5.8px;color:#f5431f;">-99</div>
<div class="t" style="right:744.7px;top:674.00px;font-size:16.2px;line-height:16.2px;font-family:'Liberation Mono', monospace;letter-spacing:-0.7px;word-spacing:-5.8px;color:#f5431f;"><svg width="10.2" height="9.6" style="position:static;display:inline-block;vertical-align:baseline;margin-right:1.6px"><path d="M0 0H10.2L5.1 9.6Z" fill="#f5431f"/></svg>0.2%</div>
<div class="t" style="right:624.0px;top:674.00px;font-size:16.2px;line-height:16.2px;font-family:'Liberation Mono', monospace;letter-spacing:-0.24px;word-spacing:-5.8px;color:#f5431f;">-440</div>
<div class="t" style="right:505.0999999999999px;top:674.00px;font-size:16.2px;line-height:16.2px;font-family:'Liberation Mono', monospace;letter-spacing:-0.7px;word-spacing:-5.8px;color:#f5431f;"><svg width="10.2" height="9.6" style="position:static;display:inline-block;vertical-align:baseline;margin-right:1.6px"><path d="M0 0H10.2L5.1 9.6Z" fill="#f5431f"/></svg>0.9%</div>
<div style="left:12.5px;top:692.7px;width:1401px;height:2px;background:#e6e6e6;"></div>
<div class="t" style="left:77.8px;top:700.00px;font-size:15.8px;line-height:15.8px;transform:scaleX(1.0376);transform-origin:left center;color:#636363;">Micro loan portfolio</div>
<div class="t" style="right:1351.8px;top:700.00px;font-size:16.2px;line-height:16.2px;font-family:'Liberation Mono', monospace;letter-spacing:-0.24px;word-spacing:-5.8px;color:#595959;">0</div>
<div class="t" style="right:1230.5px;top:700.00px;font-size:16.2px;line-height:16.2px;font-family:'Liberation Mono', monospace;letter-spacing:-0.24px;word-spacing:-5.8px;color:#595959;">171</div>
<div class="t" style="right:1108.6999999999998px;top:700.00px;font-size:16.2px;line-height:16.2px;font-family:'Liberation Mono', monospace;letter-spacing:-0.24px;word-spacing:-5.8px;color:#595959;">985</div>
<div class="t" style="right:987.2px;top:700.00px;font-size:16.2px;line-height:16.2px;font-family:'Liberation Mono', monospace;letter-spacing:-0.24px;word-spacing:-5.8px;color:#595959;">1 020</div>
<div class="t" style="right:866.2px;top:700.00px;font-size:16.2px;line-height:16.2px;font-family:'Liberation Mono', monospace;letter-spacing:-0.24px;word-spacing:-5.8px;color:#1e6b2c;">35</div>
<div class="t" style="right:744.7px;top:700.00px;font-size:16.2px;line-height:16.2px;font-family:'Liberation Mono', monospace;letter-spacing:-0.7px;word-spacing:-5.8px;color:#1e6b2c;"><svg width="10.2" height="9.6" style="position:static;display:inline-block;vertical-align:baseline;margin-right:1.6px"><path d="M0 9.6L5.1 0L10.2 9.6Z" fill="#1e6b2c"/></svg>3.6%</div>
<div class="t" style="right:624.0px;top:700.00px;font-size:16.2px;line-height:16.2px;font-family:'Liberation Mono', monospace;letter-spacing:-0.24px;word-spacing:-5.8px;color:#1e6b2c;">137</div>
<div class="t" style="right:505.0999999999999px;top:700.00px;font-size:16.2px;line-height:16.2px;font-family:'Liberation Mono', monospace;letter-spacing:-0.7px;word-spacing:-5.8px;color:#1e6b2c;"><svg width="10.2" height="9.6" style="position:static;display:inline-block;vertical-align:baseline;margin-right:1.6px"><path d="M0 9.6L5.1 0L10.2 9.6Z" fill="#1e6b2c"/></svg>15.5%</div>
<div style="left:12.5px;top:719.9px;width:1401px;height:1px;background:#e2e2e2;"></div>
<div class="t" style="left:77.8px;top:726.00px;font-size:15.8px;line-height:15.8px;transform:scaleX(1.0204);transform-origin:left center;color:#636363;">Plastic cards and overdraft portfolio</div>
<div class="t" style="right:1351.8px;top:727.00px;font-size:16.2px;line-height:16.2px;font-family:'Liberation Mono', monospace;letter-spacing:-0.24px;word-spacing:-5.8px;color:#595959;">7 192</div>
<div class="t" style="right:1230.5px;top:727.00px;font-size:16.2px;line-height:16.2px;font-family:'Liberation Mono', monospace;letter-spacing:-0.24px;word-spacing:-5.8px;color:#595959;">40 038</div>
<div class="t" style="right:1108.6999999999998px;top:727.00px;font-size:16.2px;line-height:16.2px;font-family:'Liberation Mono', monospace;letter-spacing:-0.24px;word-spacing:-5.8px;color:#595959;">56 594</div>
<div class="t" style="right:987.2px;top:727.00px;font-size:16.2px;line-height:16.2px;font-family:'Liberation Mono', monospace;letter-spacing:-0.24px;word-spacing:-5.8px;color:#595959;">55 862</div>
<div class="t" style="right:866.2px;top:727.00px;font-size:16.2px;line-height:16.2px;font-family:'Liberation Mono', monospace;letter-spacing:-0.24px;word-spacing:-5.8px;color:#f5431f;">-732</div>
<div class="t" style="right:744.7px;top:727.00px;font-size:16.2px;line-height:16.2px;font-family:'Liberation Mono', monospace;letter-spacing:-0.7px;word-spacing:-5.8px;color:#f5431f;"><svg width="10.2" height="9.6" style="position:static;display:inline-block;vertical-align:baseline;margin-right:1.6px"><path d="M0 0H10.2L5.1 9.6Z" fill="#f5431f"/></svg>1.3%</div>
<div class="t" style="right:624.0px;top:727.00px;font-size:16.2px;line-height:16.2px;font-family:'Liberation Mono', monospace;letter-spacing:-0.24px;word-spacing:-5.8px;color:#f5431f;">-240</div>
<div class="t" style="right:505.0999999999999px;top:727.00px;font-size:16.2px;line-height:16.2px;font-family:'Liberation Mono', monospace;letter-spacing:-0.7px;word-spacing:-5.8px;color:#f5431f;"><svg width="10.2" height="9.6" style="position:static;display:inline-block;vertical-align:baseline;margin-right:1.6px"><path d="M0 0H10.2L5.1 9.6Z" fill="#f5431f"/></svg>0.4%</div>
<div style="left:12.5px;top:746.1px;width:1401px;height:1px;background:#e2e2e2;"></div>
<svg style="left:50.7px;top:752.2px" width="13" height="13"><circle cx="6.5" cy="6.5" r="6.5" fill="#525252"/><rect x="2.9" y="5.5" width="7.2" height="2.1" fill="#fff"/></svg>
<div class="t" style="left:77.8px;top:752.00px;font-size:15.8px;line-height:15.8px;transform:scaleX(0.9930);transform-origin:left center;font-weight:bold;color:#404040;">Securities</div>
<div class="t" style="right:1351.8px;top:754.00px;font-size:16.2px;line-height:16.2px;font-family:'Liberation Mono', monospace;letter-spacing:-0.24px;word-spacing:-5.8px;font-weight:bold;color:#404040;">883 868</div>
<div class="t" style="right:1230.5px;top:754.00px;font-size:16.2px;line-height:16.2px;font-family:'Liberation Mono', monospace;letter-spacing:-0.24px;word-spacing:-5.8px;font-weight:bold;color:#404040;">1 173 591</div>
<div class="t" style="right:1108.6999999999998px;top:754.00px;font-size:16.2px;line-height:16.2px;font-family:'Liberation Mono', monospace;letter-spacing:-0.24px;word-spacing:-5.8px;font-weight:bold;color:#404040;">1 269 076</div>
<div class="t" style="right:987.2px;top:754.00px;font-size:16.2px;line-height:16.2px;font-family:'Liberation Mono', monospace;letter-spacing:-0.24px;word-spacing:-5.8px;font-weight:bold;color:#404040;">1 304 106</div>
<div class="t" style="right:866.2px;top:754.00px;font-size:16.2px;line-height:16.2px;font-family:'Liberation Mono', monospace;letter-spacing:-0.24px;word-spacing:-5.8px;font-weight:bold;color:#1e6b2c;">35 031</div>
<div class="t" style="right:744.7px;top:754.00px;font-size:16.2px;line-height:16.2px;font-family:'Liberation Mono', monospace;letter-spacing:-0.7px;word-spacing:-5.8px;font-weight:bold;color:#1e6b2c;"><svg width="10.2" height="9.6" style="position:static;display:inline-block;vertical-align:baseline;margin-right:1.6px"><path d="M0 9.6L5.1 0L10.2 9.6Z" fill="#1e6b2c"/></svg>2.8%</div>
<div class="t" style="right:624.0px;top:754.00px;font-size:16.2px;line-height:16.2px;font-family:'Liberation Mono', monospace;letter-spacing:-0.24px;word-spacing:-5.8px;font-weight:bold;color:#1e6b2c;">35 332</div>
<div class="t" style="right:505.0999999999999px;top:754.00px;font-size:16.2px;line-height:16.2px;font-family:'Liberation Mono', monospace;letter-spacing:-0.7px;word-spacing:-5.8px;font-weight:bold;color:#1e6b2c;"><svg width="10.2" height="9.6" style="position:static;display:inline-block;vertical-align:baseline;margin-right:1.6px"><path d="M0 9.6L5.1 0L10.2 9.6Z" fill="#1e6b2c"/></svg>2.8%</div>
<div style="left:12.5px;top:773.5px;width:1401px;height:1px;background:#e2e2e2;"></div>
<div class="t" style="left:77.8px;top:780.00px;font-size:15.8px;line-height:15.8px;transform:scaleX(1.0131);transform-origin:left center;color:#636363;">Agrar securities</div>
<div class="t" style="right:1351.8px;top:780.00px;font-size:16.2px;line-height:16.2px;font-family:'Liberation Mono', monospace;letter-spacing:-0.24px;word-spacing:-5.8px;color:#595959;">696 782</div>
<div class="t" style="right:1230.5px;top:780.00px;font-size:16.2px;line-height:16.2px;font-family:'Liberation Mono', monospace;letter-spacing:-0.24px;word-spacing:-5.8px;color:#595959;">579 479</div>
<div class="t" style="right:1108.6999999999998px;top:780.00px;font-size:16.2px;line-height:16.2px;font-family:'Liberation Mono', monospace;letter-spacing:-0.24px;word-spacing:-5.8px;color:#595959;">579 479</div>
<div class="t" style="right:987.2px;top:780.00px;font-size:16.2px;line-height:16.2px;font-family:'Liberation Mono', monospace;letter-spacing:-0.24px;word-spacing:-5.8px;color:#595959;">579 479</div>
<div class="t" style="right:866.2px;top:780.00px;font-size:16.2px;line-height:16.2px;font-family:'Liberation Mono', monospace;letter-spacing:-0.24px;word-spacing:-5.8px;color:#f5431f;">0</div>
<div class="t" style="right:744.7px;top:780.00px;font-size:16.2px;line-height:16.2px;font-family:'Liberation Mono', monospace;letter-spacing:-0.7px;word-spacing:-5.8px;color:#f5431f;">0%</div>
<div class="t" style="right:624.0px;top:780.00px;font-size:16.2px;line-height:16.2px;font-family:'Liberation Mono', monospace;letter-spacing:-0.24px;word-spacing:-5.8px;color:#f5431f;">0</div>
<div class="t" style="right:505.0999999999999px;top:780.00px;font-size:16.2px;line-height:16.2px;font-family:'Liberation Mono', monospace;letter-spacing:-0.7px;word-spacing:-5.8px;color:#f5431f;">0%</div>
<div style="left:12.5px;top:799.7px;width:1401px;height:1px;background:#e2e2e2;"></div>
<div class="t" style="left:77.8px;top:806.00px;font-size:15.8px;line-height:15.8px;transform:scaleX(0.9916);transform-origin:left center;color:#636363;">Mastercard and Visa</div>
<div class="t" style="right:1351.8px;top:807.00px;font-size:16.2px;line-height:16.2px;font-family:'Liberation Mono', monospace;letter-spacing:-0.24px;word-spacing:-5.8px;color:#595959;">70 947</div>
<div class="t" style="right:1230.5px;top:807.00px;font-size:16.2px;line-height:16.2px;font-family:'Liberation Mono', monospace;letter-spacing:-0.24px;word-spacing:-5.8px;color:#595959;">80 707</div>
<div class="t" style="right:1108.6999999999998px;top:807.00px;font-size:16.2px;line-height:16.2px;font-family:'Liberation Mono', monospace;letter-spacing:-0.24px;word-spacing:-5.8px;color:#595959;">80 707</div>
<div class="t" style="right:987.2px;top:807.00px;font-size:16.2px;line-height:16.2px;font-family:'Liberation Mono', monospace;letter-spacing:-0.24px;word-spacing:-5.8px;color:#595959;">80 707</div>
<div class="t" style="right:866.2px;top:807.00px;font-size:16.2px;line-height:16.2px;font-family:'Liberation Mono', monospace;letter-spacing:-0.24px;word-spacing:-5.8px;color:#f5431f;">0</div>
<div class="t" style="right:744.7px;top:807.00px;font-size:16.2px;line-height:16.2px;font-family:'Liberation Mono', monospace;letter-spacing:-0.7px;word-spacing:-5.8px;color:#f5431f;">0%</div>
<div class="t" style="right:624.0px;top:807.00px;font-size:16.2px;line-height:16.2px;font-family:'Liberation Mono', monospace;letter-spacing:-0.24px;word-spacing:-5.8px;color:#f5431f;">0</div>
<div class="t" style="right:505.0999999999999px;top:807.00px;font-size:16.2px;line-height:16.2px;font-family:'Liberation Mono', monospace;letter-spacing:-0.7px;word-spacing:-5.8px;color:#f5431f;">0%</div>
<div style="left:12.5px;top:825.7px;width:1401px;height:2px;background:#e6e6e6;"></div>
<div class="t" style="left:77.8px;top:833.00px;font-size:15.8px;line-height:15.8px;transform:scaleX(1.0084);transform-origin:left center;color:#636363;">Local state bonds</div>
<div class="t" style="right:1351.8px;top:834.00px;font-size:16.2px;line-height:16.2px;font-family:'Liberation Mono', monospace;letter-spacing:-0.24px;word-spacing:-5.8px;color:#595959;">56 100</div>
<div class="t" style="right:1230.5px;top:834.00px;font-size:16.2px;line-height:16.2px;font-family:'Liberation Mono', monospace;letter-spacing:-0.24px;word-spacing:-5.8px;color:#595959;">441 528</div>
<div class="t" style="right:1108.6999999999998px;top:834.00px;font-size:16.2px;line-height:16.2px;font-family:'Liberation Mono', monospace;letter-spacing:-0.24px;word-spacing:-5.8px;color:#595959;">507 238</div>
<div class="t" style="right:987.2px;top:834.00px;font-size:16.2px;line-height:16.2px;font-family:'Liberation Mono', monospace;letter-spacing:-0.24px;word-spacing:-5.8px;color:#595959;">528 522</div>
<div class="t" style="right:866.2px;top:834.00px;font-size:16.2px;line-height:16.2px;font-family:'Liberation Mono', monospace;letter-spacing:-0.24px;word-spacing:-5.8px;color:#1e6b2c;">21 284</div>
<div class="t" style="right:744.7px;top:834.00px;font-size:16.2px;line-height:16.2px;font-family:'Liberation Mono', monospace;letter-spacing:-0.7px;word-spacing:-5.8px;color:#1e6b2c;"><svg width="10.2" height="9.6" style="position:static;display:inline-block;vertical-align:baseline;margin-right:1.6px"><path d="M0 9.6L5.1 0L10.2 9.6Z" fill="#1e6b2c"/></svg>4.2%</div>
<div class="t" style="right:624.0px;top:834.00px;font-size:16.2px;line-height:16.2px;font-family:'Liberation Mono', monospace;letter-spacing:-0.24px;word-spacing:-5.8px;color:#1e6b2c;">21 361</div>
<div class="t" style="right:505.0999999999999px;top:834.00px;font-size:16.2px;line-height:16.2px;font-family:'Liberation Mono', monospace;letter-spacing:-0.7px;word-spacing:-5.8px;color:#1e6b2c;"><svg width="10.2" height="9.6" style="position:static;display:inline-block;vertical-align:baseline;margin-right:1.6px"><path d="M0 9.6L5.1 0L10.2 9.6Z" fill="#1e6b2c"/></svg>4.2%</div>
<div style="left:12.5px;top:852.9px;width:1401px;height:1px;background:#e2e2e2;"></div>
<div class="t" style="left:77.8px;top:859.00px;font-size:15.8px;line-height:15.8px;transform:scaleX(1.0258);transform-origin:left center;color:#636363;">Other securities</div>
<div class="t" style="right:1351.8px;top:859.00px;font-size:16.2px;line-height:16.2px;font-family:'Liberation Mono', monospace;letter-spacing:-0.24px;word-spacing:-5.8px;color:#595959;">60 039</div>
<div class="t" style="right:1230.5px;top:859.00px;font-size:16.2px;line-height:16.2px;font-family:'Liberation Mono', monospace;letter-spacing:-0.24px;word-spacing:-5.8px;color:#595959;">71 878</div>
<div class="t" style="right:1108.6999999999998px;top:859.00px;font-size:16.2px;line-height:16.2px;font-family:'Liberation Mono', monospace;letter-spacing:-0.24px;word-spacing:-5.8px;color:#595959;">101 653</div>
<div class="t" style="right:987.2px;top:859.00px;font-size:16.2px;line-height:16.2px;font-family:'Liberation Mono', monospace;letter-spacing:-0.24px;word-spacing:-5.8px;color:#595959;">115 399</div>
<div class="t" style="right:866.2px;top:859.00px;font-size:16.2px;line-height:16.2px;font-family:'Liberation Mono', monospace;letter-spacing:-0.24px;word-spacing:-5.8px;color:#1e6b2c;">13 746</div>
<div class="t" style="right:744.7px;top:859.00px;font-size:16.2px;line-height:16.2px;font-family:'Liberation Mono', monospace;letter-spacing:-0.7px;word-spacing:-5.8px;color:#1e6b2c;"><svg width="10.2" height="9.6" style="position:static;display:inline-block;vertical-align:baseline;margin-right:1.6px"><path d="M0 9.6L5.1 0L10.2 9.6Z" fill="#1e6b2c"/></svg>13.5%</div>
<div class="t" style="right:624.0px;top:859.00px;font-size:16.2px;line-height:16.2px;font-family:'Liberation Mono', monospace;letter-spacing:-0.24px;word-spacing:-5.8px;color:#1e6b2c;">13 971</div>
<div class="t" style="right:505.0999999999999px;top:859.00px;font-size:16.2px;line-height:16.2px;font-family:'Liberation Mono', monospace;letter-spacing:-0.7px;word-spacing:-5.8px;color:#1e6b2c;"><svg width="10.2" height="9.6" style="position:static;display:inline-block;vertical-align:baseline;margin-right:1.6px"><path d="M0 9.6L5.1 0L10.2 9.6Z" fill="#1e6b2c"/></svg>13.8%</div>
<div style="left:12.5px;top:878.8px;width:1401px;height:1px;background:#e2e2e2;"></div>
<svg style="left:50.7px;top:885.3px" width="13" height="13"><circle cx="6.5" cy="6.5" r="6.5" fill="#525252"/><rect x="2.9" y="5.5" width="7.2" height="2.1" fill="#fff"/><rect x="5.45" y="2.95" width="2.1" height="7.2" fill="#fff"/></svg>
<div class="t" style="left:77.8px;top:885.00px;font-size:15.8px;line-height:15.8px;transform:scaleX(1.0097);transform-origin:left center;font-weight:bold;color:#404040;">Investments</div>
<div class="t" style="right:1351.8px;top:887.00px;font-size:16.2px;line-height:16.2px;font-family:'Liberation Mono', monospace;letter-spacing:-0.24px;word-spacing:-5.8px;font-weight:bold;color:#404040;">118 494</div>
<div class="t" style="right:1230.5px;top:887.00px;font-size:16.2px;line-height:16.2px;font-family:'Liberation Mono', monospace;letter-spacing:-0.24px;word-spacing:-5.8px;font-weight:bold;color:#404040;">103 994</div>
<div class="t" style="right:1108.6999999999998px;top:887.00px;font-size:16.2px;line-height:16.2px;font-family:'Liberation Mono', monospace;letter-spacing:-0.24px;word-spacing:-5.8px;font-weight:bold;color:#404040;">106 874</div>
<div class="t" style="right:987.2px;top:887.00px;font-size:16.2px;line-height:16.2px;font-family:'Liberation Mono', monospace;letter-spacing:-0.24px;word-spacing:-5.8px;font-weight:bold;color:#404040;">106 874</div>
<div class="t" style="right:866.2px;top:887.00px;font-size:16.2px;line-height:16.2px;font-family:'Liberation Mono', monospace;letter-spacing:-0.24px;word-spacing:-5.8px;font-weight:bold;color:#f5431f;">0</div>
<div class="t" style="right:744.7px;top:887.00px;font-size:16.2px;line-height:16.2px;font-family:'Liberation Mono', monospace;letter-spacing:-0.7px;word-spacing:-5.8px;font-weight:bold;color:#f5431f;">0%</div>
<div class="t" style="right:624.0px;top:887.00px;font-size:16.2px;line-height:16.2px;font-family:'Liberation Mono', monospace;letter-spacing:-0.24px;word-spacing:-5.8px;font-weight:bold;color:#f5431f;">0</div>
<div class="t" style="right:505.0999999999999px;top:887.00px;font-size:16.2px;line-height:16.2px;font-family:'Liberation Mono', monospace;letter-spacing:-0.7px;word-spacing:-5.8px;font-weight:bold;color:#f5431f;">0%</div>
<div style="left:562.9px;top:367px;width:1px;height:541px;background:#e2e2e2;"></div>
<div style="left:684.3px;top:367px;width:1px;height:541px;background:#e2e2e2;"></div>
<div style="left:805.5px;top:367px;width:1px;height:541px;background:#e2e2e2;"></div>
<div style="left:926.6999999999999px;top:367px;width:1px;height:541px;background:#e2e2e2;"></div>
<div style="left:1048.3px;top:367px;width:1px;height:541px;background:#e2e2e2;"></div>
<div style="left:1169.8px;top:367px;width:1px;height:541px;background:#e2e2e2;"></div>
<div style="left:1290.8999999999999px;top:367px;width:1px;height:541px;background:#e2e2e2;"></div>
<div style="left:442px;top:248.5px;width:1.2px;height:660px;background:#a9a9a9;"></div>
<div style="left:12.5px;top:366.3px;width:1401px;height:1.2px;background:#8f8f8f;"></div>
<div style="left:1401px;top:367px;width:12.5px;height:532px;background:linear-gradient(90deg,rgba(0,0,0,0),rgba(0,0,0,0.075));"></div>
<div style="left:443px;top:879.8px;width:970.5px;height:14px;background:linear-gradient(rgba(0,0,0,0.085),rgba(0,0,0,0));"></div>
<div style="left:0px;top:897px;width:1420px;height:2px;background:#fff;"></div>
<!-- treemap panel -->
<div style="left:1426px;top:248px;width:460px;height:649px;border:1px solid #e0e0e0;background:#fff;"></div>
<div style="left:1427px;top:296px;width:458.5px;height:1px;background:#e0e0e0;"></div>
<div style="left:1433.3px;top:294.2px;width:249.4px;height:2.2px;background:#009845;border-radius:1px;"></div>
<div class="t" style="left:1454px;top:265.19px;font-size:15.6px;line-height:15.6px;transform:scaleX(0.9730);transform-origin:left center;font-weight:bold;color:#4a4a4a;">Карта баланса</div>
<div class="t" style="left:1704px;top:265.19px;font-size:15.6px;line-height:15.6px;transform:scaleX(0.9814);transform-origin:left center;font-weight:bold;color:#4a4a4a;">Тренд</div>
<div style="left:1437.4px;top:306.3px;width:436.6px;height:31.4px;background:#f0f0f0;"></div>
<div class="t" style="left:1443px;top:311.52px;font-size:16.4px;line-height:16.4px;transform:scaleX(1.0362);transform-origin:left center;color:#595959;">Asset</div>
<div style="left:1437.4px;top:589.8px;width:372.4px;height:32px;background:#f0f0f0;"></div>
<div class="t" style="left:1443.2px;top:596.12px;font-size:16.4px;line-height:16.4px;transform:scaleX(1.0787);transform-origin:left center;color:#595959;">Liability</div>
<div style="left:1812.4px;top:589.8px;width:61.6px;height:32px;background:#f0f0f0;"></div>
<div class="t" style="left:1819px;top:596.12px;font-size:16.4px;line-height:16.4px;transform:scaleX(0.9872);transform-origin:left center;color:#595959;">Equity</div>
<div style="left:1437.8px;top:337.6px;width:436.2px;height:250px;background:#f7f9fb;"></div>
<div style="left:1438.6px;top:337.6px;width:231.0px;height:131.4px;background:#b7cadf;"></div>
<div style="left:1672.4px;top:337.6px;width:115.8px;height:120.8px;background:#b7cadf;"></div>
<div style="left:1814px;top:565px;width:34.4px;height:21.8px;background:#b7cadf;"></div>
<div style="left:1438.6px;top:337.6px;width:117.6px;height:131.4px;background:#4477aa;"></div>
<div style="left:1557.2px;top:337.6px;width:112.4px;height:64.6px;background:#4477aa;"></div>
<div style="left:1557.2px;top:403.2px;width:94.2px;height:65.8px;background:#4477aa;"></div>
<div style="left:1652.4px;top:403.2px;width:17.2px;height:33.8px;background:#4477aa;"></div>
<div style="left:1652.4px;top:438px;width:17.2px;height:30px;background:#4477aa;"></div>
<div style="left:1438.6px;top:471.6px;width:231.0px;height:115.2px;background:#4477aa;"></div>
<div style="left:1672.4px;top:337.6px;width:59.8px;height:102.4px;background:#4477aa;"></div>
<div style="left:1733.3px;top:337.6px;width:54.9px;height:102.4px;background:#4477aa;"></div>
<div style="left:1672.4px;top:441.3px;width:67.6px;height:17.1px;background:#4477aa;"></div>
<div style="left:1741.2px;top:441.3px;width:47.0px;height:17.1px;background:#4477aa;"></div>
<div style="left:1790.9px;top:337.6px;width:82.3px;height:120.8px;background:#4477aa;"></div>
<div style="left:1672.4px;top:461.2px;width:72.6px;height:125.6px;background:#4477aa;"></div>
<div style="left:1747.9px;top:461.2px;width:76.3px;height:51.8px;background:#4477aa;"></div>
<div style="left:1827.2px;top:461.2px;width:46.0px;height:51.8px;background:#4477aa;"></div>
<div style="left:1747.9px;top:516px;width:62.9px;height:36.4px;background:#4477aa;"></div>
<div style="left:1747.9px;top:555.2px;width:62.9px;height:31.6px;background:#4477aa;"></div>
<div style="left:1814px;top:516px;width:34.4px;height:46px;background:#4477aa;"></div>
<div style="left:1851.3px;top:516px;width:21.9px;height:46px;background:#4477aa;"></div>
<div style="left:1814px;top:565px;width:14.6px;height:13px;background:#4477aa;"></div>
<div style="left:1814px;top:579.3px;width:14.6px;height:7.5px;background:#4477aa;"></div>
<div style="left:1830px;top:565px;width:9.2px;height:10.6px;background:#4477aa;"></div>
<div style="left:1840.4px;top:565px;width:8.0px;height:10.6px;background:#4477aa;"></div>
<div style="left:1830px;top:577px;width:4.5px;height:9.8px;background:#4477aa;"></div>
<div style="left:1835.6px;top:577px;width:5.9px;height:4.5px;background:#4477aa;"></div>
<div style="left:1842.6px;top:577px;width:5.8px;height:4.5px;background:#4477aa;"></div>
<div style="left:1835.6px;top:582.6px;width:4.4px;height:4.2px;background:#4477aa;"></div>
<div style="left:1841px;top:582.6px;width:3.5px;height:4.2px;background:#4477aa;"></div>
<div style="left:1845.4px;top:582.6px;width:3.0px;height:4.2px;background:#4477aa;"></div>
<div style="left:1851.3px;top:565px;width:21.9px;height:13.6px;background:#4477aa;"></div>
<div style="left:1851.3px;top:581.3px;width:21.9px;height:5.5px;background:#4477aa;"></div>
<div style="left:1437.8px;top:621.7px;width:372px;height:236px;background:#f8f5e4;"></div>
<div style="left:1438.6px;top:621.7px;width:233.2px;height:235.9px;background:#efe7ba;"></div>
<div style="left:1674.5px;top:753.4px;width:74.7px;height:104.2px;background:#efe7ba;"></div>
<div style="left:1438.6px;top:621.7px;width:127.4px;height:144.7px;background:#ddcc77;"></div>
<div style="left:1567.2px;top:621.7px;width:104.6px;height:144.7px;background:#ddcc77;"></div>
<div style="left:1438.6px;top:767.5px;width:123.2px;height:90.1px;background:#ddcc77;"></div>
<div style="left:1563px;top:767.5px;width:50.8px;height:90.1px;background:#ddcc77;"></div>
<div style="left:1615px;top:767.5px;width:56.8px;height:29.7px;background:#ddcc77;"></div>
<div style="left:1615px;top:798.6px;width:35px;height:36.0px;background:#ddcc77;"></div>
<div style="left:1651.2px;top:798.6px;width:20.6px;height:36.0px;background:#ddcc77;"></div>
<div style="left:1615px;top:836px;width:30.5px;height:21.6px;background:#ddcc77;"></div>
<div style="left:1647px;top:836px;width:15.4px;height:21.6px;background:#ddcc77;"></div>
<div style="left:1663.8px;top:836px;width:8.0px;height:21.6px;background:#ddcc77;"></div>
<div style="left:1674.5px;top:621.7px;width:134.1px;height:128.9px;background:#ddcc77;"></div>
<div style="left:1674.5px;top:753.4px;width:74.7px;height:48.6px;background:#ddcc77;"></div>
<div style="left:1674.5px;top:803px;width:47.9px;height:54.6px;background:#ddcc77;"></div>
<div style="left:1723.4px;top:803px;width:25.8px;height:54.6px;background:#ddcc77;"></div>
<div style="left:1751.8px;top:753.4px;width:56.8px;height:37.2px;background:#ddcc77;"></div>
<div style="left:1751.8px;top:793.4px;width:56.8px;height:28.4px;background:#ddcc77;"></div>
<div style="left:1751.8px;top:825px;width:14.8px;height:32.6px;background:#ddcc77;"></div>
<div style="left:1769.6px;top:825px;width:18.6px;height:16px;background:#ddcc77;"></div>
<div style="left:1791.2px;top:825px;width:17.4px;height:16px;background:#ddcc77;"></div>
<div style="left:1769.6px;top:843.8px;width:18.6px;height:13.8px;background:#ddcc77;"></div>
<div style="left:1791.2px;top:843.8px;width:17.4px;height:13.8px;background:#ddcc77;"></div>
<div style="left:1812.4px;top:621.7px;width:61.6px;height:236px;background:#f6e3e6;"></div>
<div style="left:1813px;top:621.7px;width:60.2px;height:212.3px;background:#cc6677;"></div>
<div style="left:1813px;top:836.9px;width:40px;height:20.7px;background:#cc6677;"></div>
<div style="left:1855.8px;top:836.9px;width:17.4px;height:20.7px;background:#cc6677;"></div>
<div class="t" style="left:1443.5px;top:342.15px;font-size:14px;line-height:14px;transform:scaleX(1.0473);transform-origin:left center;color:rgba(255,255,255,0.9);">Corporate loan</div>
<div class="t" style="left:1443.5px;top:361.15px;font-size:14px;line-height:14px;transform:scaleX(1.1364);transform-origin:left center;color:rgba(255,255,255,0.9);">portfolio</div>
<div class="t" style="left:1443.7px;top:380.81px;font-size:14.6px;line-height:14.6px;font-family:'Liberation Mono', monospace;color:rgba(255,255,255,0.9);word-spacing:-4.6px;letter-spacing:-0.1px;">1 427 776</div>
<div class="t" style="left:1561.5px;top:342.15px;font-size:14px;line-height:14px;transform:scaleX(1.0888);transform-origin:left center;color:rgba(255,255,255,0.9);">Mortgage</div>
<div class="t" style="left:1561.5px;top:361.15px;font-size:14px;line-height:14px;transform:scaleX(1.1364);transform-origin:left center;color:rgba(255,255,255,0.9);">portfolio</div>
<div class="t" style="left:1561.7px;top:380.81px;font-size:14.6px;line-height:14.6px;font-family:'Liberation Mono', monospace;color:rgba(255,255,255,0.9);word-spacing:-4.6px;letter-spacing:-0.1px;">688 251</div>
<div class="t" style="left:1562.1px;top:407.35px;font-size:14px;line-height:14px;transform:scaleX(1.0249);transform-origin:left center;color:rgba(255,255,255,0.9);">Retail loan</div>
<div class="t" style="left:1562.1px;top:427.15px;font-size:14px;line-height:14px;transform:scaleX(1.1364);transform-origin:left center;color:rgba(255,255,255,0.9);">portfolio</div>
<div class="t" style="left:1562.3px;top:447.01px;font-size:14.6px;line-height:14.6px;font-family:'Liberation Mono', monospace;color:rgba(255,255,255,0.9);word-spacing:-4.6px;letter-spacing:-0.1px;">575 525</div>
<div class="t" style="left:1676.9px;top:342.15px;font-size:14px;line-height:14px;transform:scaleX(1.0515);transform-origin:left center;color:rgba(255,255,255,0.9);">Agrar</div>
<div class="t" style="left:1676.9px;top:361.15px;font-size:14px;line-height:14px;transform:scaleX(1.1024);transform-origin:left center;color:rgba(255,255,255,0.9);">securit-</div>
<div class="t" style="left:1676.9px;top:380.15px;font-size:14px;line-height:14px;transform:scaleX(1.0728);transform-origin:left center;color:rgba(255,255,255,0.9);">ies</div>
<div class="t" style="left:1677.1000000000001px;top:399.81px;font-size:14.6px;line-height:14.6px;font-family:'Liberation Mono', monospace;color:rgba(255,255,255,0.9);word-spacing:-4.6px;letter-spacing:-0.1px;">579 4…</div>
<div class="t" style="left:1795.1px;top:342.15px;font-size:14px;line-height:14px;transform:scaleX(1.0967);transform-origin:left center;color:rgba(255,255,255,0.9);">Other</div>
<div class="t" style="left:1795.1px;top:361.15px;font-size:14px;line-height:14px;transform:scaleX(1.1154);transform-origin:left center;color:rgba(255,255,255,0.9);">nostro</div>
<div class="t" style="left:1795.3px;top:380.81px;font-size:14.6px;line-height:14.6px;font-family:'Liberation Mono', monospace;color:rgba(255,255,255,0.9);word-spacing:-4.6px;letter-spacing:-0.1px;">933 906</div>
<div class="t" style="left:1443.5px;top:476.15px;font-size:14px;line-height:14px;transform:scaleX(1.0394);transform-origin:left center;color:rgba(255,255,255,0.9);">CB placement</div>
<div class="t" style="left:1443.7px;top:495.21px;font-size:14.6px;line-height:14.6px;font-family:'Liberation Mono', monospace;color:rgba(255,255,255,0.9);word-spacing:-4.6px;letter-spacing:-0.1px;">2 465 000</div>
<div class="t" style="left:1677.3px;top:464.85px;font-size:14px;line-height:14px;transform:scaleX(1.0748);transform-origin:left center;color:rgba(255,255,255,0.9);">Overnig-</div>
<div class="t" style="left:1677.3px;top:483.75px;font-size:14px;line-height:14px;transform:scaleX(1.1905);transform-origin:left center;color:rgba(255,255,255,0.9);">ht</div>
<div class="t" style="left:1677.5px;top:503.31px;font-size:14.6px;line-height:14.6px;font-family:'Liberation Mono', monospace;color:rgba(255,255,255,0.9);word-spacing:-4.6px;letter-spacing:-0.1px;">864 108</div>
<div class="t" style="left:1442.9px;top:626.15px;font-size:14px;line-height:14px;transform:scaleX(1.0685);transform-origin:left center;color:#636363;">- Other corporate</div>
<div class="t" style="left:1442.9px;top:644.75px;font-size:14px;line-height:14px;transform:scaleX(1.0886);transform-origin:left center;color:#636363;">accounts</div>
<div class="t" style="left:1443.1000000000001px;top:664.51px;font-size:14.6px;line-height:14.6px;font-family:'Liberation Mono', monospace;color:#636363;word-spacing:-4.6px;letter-spacing:-0.1px;">1 711 009</div>
<div class="t" style="left:1571.9px;top:626.15px;font-size:14px;line-height:14px;transform:scaleX(1.0140);transform-origin:left center;color:#636363;">- Other SOE</div>
<div class="t" style="left:1571.9px;top:644.75px;font-size:14px;line-height:14px;transform:scaleX(1.0761);transform-origin:left center;color:#636363;">accounts</div>
<div class="t" style="left:1572.1000000000001px;top:664.51px;font-size:14.6px;line-height:14.6px;font-family:'Liberation Mono', monospace;color:#636363;word-spacing:-4.6px;letter-spacing:-0.1px;">1 396 014</div>
<div class="t" style="left:1443.0px;top:770.95px;font-size:14px;line-height:14px;transform:scaleX(1.0143);transform-origin:left center;color:#636363;">- OSCA related</div>
<div class="t" style="left:1443.0px;top:789.65px;font-size:14px;line-height:14px;transform:scaleX(1.0797);transform-origin:left center;color:#636363;">accounts</div>
<div class="t" style="left:1443.2px;top:809.31px;font-size:14.6px;line-height:14.6px;font-family:'Liberation Mono', monospace;color:#636363;word-spacing:-4.6px;letter-spacing:-0.1px;">1 041 397</div>
<div class="t" style="left:1679.5px;top:625.85px;font-size:14px;line-height:14px;transform:scaleX(1.0260);transform-origin:left center;color:#636363;">BOND</div>
<div class="t" style="left:1679.7px;top:645.41px;font-size:14.6px;line-height:14.6px;font-family:'Liberation Mono', monospace;color:#636363;word-spacing:-4.6px;letter-spacing:-0.1px;">1 619 049</div>
<div class="t" style="left:1817.5px;top:626.15px;font-size:14px;line-height:14px;transform:scaleX(1.0252);transform-origin:left center;color:rgba(255,255,255,0.9);">Share</div>
<div class="t" style="left:1817.5px;top:644.75px;font-size:14px;line-height:14px;transform:scaleX(1.0946);transform-origin:left center;color:rgba(255,255,255,0.9);">capital</div>
<div class="t" style="left:1817.7px;top:664.51px;font-size:14.6px;line-height:14.6px;font-family:'Liberation Mono', monospace;color:rgba(255,255,255,0.9);word-spacing:-4.6px;letter-spacing:-0.1px;">1 241…</div>
<svg style="left:1430px;top:330px" width="450" height="535" font-family="Liberation Sans" font-weight="bold" text-anchor="middle"><defs><mask id="ovm" maskUnits="userSpaceOnUse" x="0" y="0" width="450" height="535"><rect width="450" height="535" fill="#fff"/><text transform="translate(123.00,64.50) scale(0.9770,1)" font-size="23.6" fill="#000">Loan and advances</text><text transform="translate(125.00,95.00) scale(0.9987,1)" font-size="23.6" fill="#000">to customers</text><text transform="translate(124.20,204.40) scale(0.9708,1)" font-size="22.8" fill="#000">CB placement</text><text transform="translate(300.80,72.00) scale(1.0813,1)" font-size="15.4" fill="#000">Securities</text><text transform="translate(402.00,62.30) scale(0.9739,1)" font-size="15.4" fill="#000">Other</text><text transform="translate(401.80,81.40) scale(0.9268,1)" font-size="15.4" fill="#000">nostro</text><text transform="translate(279.00,198.00) scale(1.0453,1)" font-size="12.6" fill="#000">Overnight</text><text transform="translate(125.20,396.20) scale(1.0461,1)" font-size="30.6" fill="#000">Current</text><text transform="translate(125.40,439.20) scale(1.0295,1)" font-size="30.6" fill="#000">accounts</text><text transform="translate(311.40,360.00) scale(0.9803,1)" font-size="17.6" fill="#000">BOND</text><text transform="translate(281.90,470.60) scale(1.0285,1)" font-size="11.4" fill="#000">Term</text><text transform="translate(282.00,486.40) scale(1.0240,1)" font-size="11.4" fill="#000">deposits</text><text transform="translate(413.10,391.80) scale(0.9989,1)" font-size="15.2" fill="#000">Share</text><text transform="translate(413.20,412.50) scale(1.0300,1)" font-size="15.2" fill="#000">capital</text></mask></defs><g mask="url(#ovm)" fill="none" stroke-linejoin="round"><text transform="translate(123.00,64.50) scale(0.9770,1)" font-size="23.6" stroke="rgba(25,40,60,0.46)" stroke-width="1.90">Loan and advances</text><text transform="translate(125.00,95.00) scale(0.9987,1)" font-size="23.6" stroke="rgba(25,40,60,0.46)" stroke-width="1.90">to customers</text><text transform="translate(124.20,204.40) scale(0.9708,1)" font-size="22.8" stroke="rgba(25,40,60,0.46)" stroke-width="1.90">CB placement</text><text transform="translate(300.80,72.00) scale(1.0813,1)" font-size="15.4" stroke="rgba(25,40,60,0.46)" stroke-width="1.31">Securities</text><text transform="translate(402.00,62.30) scale(0.9739,1)" font-size="15.4" stroke="rgba(25,40,60,0.46)" stroke-width="1.31">Other</text><text transform="translate(401.80,81.40) scale(0.9268,1)" font-size="15.4" stroke="rgba(25,40,60,0.46)" stroke-width="1.31">nostro</text><text transform="translate(279.00,198.00) scale(1.0453,1)" font-size="12.6" stroke="rgba(25,40,60,0.46)" stroke-width="1.07">Overnight</text><text transform="translate(125.20,396.20) scale(1.0461,1)" font-size="30.6" stroke="rgba(70,60,10,0.16)" stroke-width="1.90">Current</text><text transform="translate(125.40,439.20) scale(1.0295,1)" font-size="30.6" stroke="rgba(70,60,10,0.16)" stroke-width="1.90">accounts</text><text transform="translate(311.40,360.00) scale(0.9803,1)" font-size="17.6" stroke="rgba(70,60,10,0.16)" stroke-width="1.50">BOND</text><text transform="translate(281.90,470.60) scale(1.0285,1)" font-size="11.4" stroke="rgba(70,60,10,0.16)" stroke-width="0.97">Term</text><text transform="translate(282.00,486.40) scale(1.0240,1)" font-size="11.4" stroke="rgba(70,60,10,0.16)" stroke-width="0.97">deposits</text><text transform="translate(413.10,391.80) scale(0.9989,1)" font-size="15.2" stroke="rgba(70,20,30,0.50)" stroke-width="1.29">Share</text><text transform="translate(413.20,412.50) scale(1.0300,1)" font-size="15.2" stroke="rgba(70,20,30,0.50)" stroke-width="1.29">capital</text></g><text transform="translate(123.00,64.50) scale(0.9770,1)" font-size="23.6" fill="rgba(255,255,255,0.40)">Loan and advances</text><text transform="translate(125.00,95.00) scale(0.9987,1)" font-size="23.6" fill="rgba(255,255,255,0.40)">to customers</text><text transform="translate(124.20,204.40) scale(0.9708,1)" font-size="22.8" fill="rgba(255,255,255,0.40)">CB placement</text><text transform="translate(300.80,72.00) scale(1.0813,1)" font-size="15.4" fill="rgba(255,255,255,0.40)">Securities</text><text transform="translate(402.00,62.30) scale(0.9739,1)" font-size="15.4" fill="rgba(255,255,255,0.40)">Other</text><text transform="translate(401.80,81.40) scale(0.9268,1)" font-size="15.4" fill="rgba(255,255,255,0.40)">nostro</text><text transform="translate(279.00,198.00) scale(1.0453,1)" font-size="12.6" fill="rgba(255,255,255,0.40)">Overnight</text><text transform="translate(125.20,396.20) scale(1.0461,1)" font-size="30.6" fill="rgba(50,45,10,0.33)">Current</text><text transform="translate(125.40,439.20) scale(1.0295,1)" font-size="30.6" fill="rgba(50,45,10,0.33)">accounts</text><text transform="translate(311.40,360.00) scale(0.9803,1)" font-size="17.6" fill="rgba(50,45,10,0.33)">BOND</text><text transform="translate(281.90,470.60) scale(1.0285,1)" font-size="11.4" fill="rgba(50,45,10,0.33)">Term</text><text transform="translate(282.00,486.40) scale(1.0240,1)" font-size="11.4" fill="rgba(50,45,10,0.33)">deposits</text><text transform="translate(413.10,391.80) scale(0.9989,1)" font-size="15.2" fill="rgba(255,255,255,0.32)">Share</text><text transform="translate(413.20,412.50) scale(1.0300,1)" font-size="15.2" fill="rgba(255,255,255,0.32)">capital</text></svg>
<div class="t" style="left:1433.3px;top:878.55px;font-size:16.6px;line-height:16.6px;transform:scaleX(1.0243);transform-origin:left center;font-style:italic;color:#8c8c8c;">* Набор данных содержит отрицательные или нуле…</div>
</body></html>
